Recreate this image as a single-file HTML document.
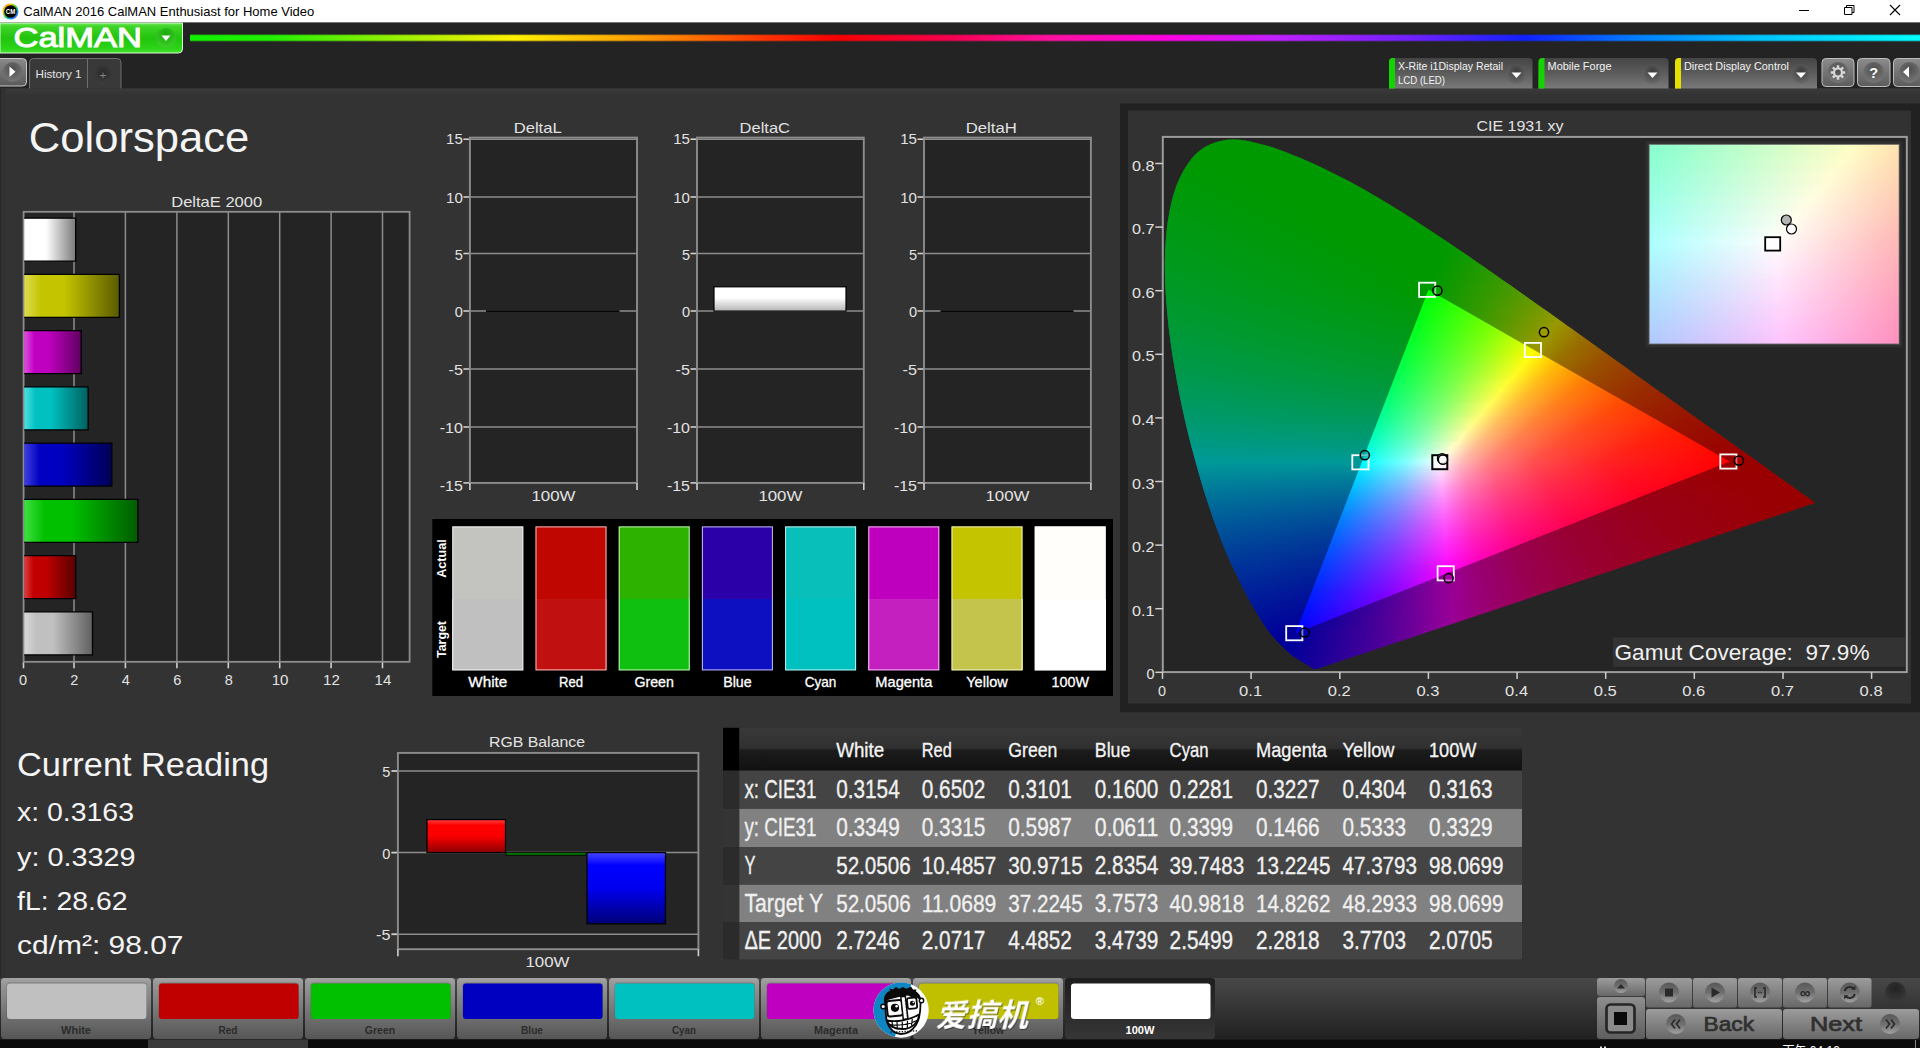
<!DOCTYPE html>
<html><head><meta charset="utf-8"><title>CalMAN 2016 CalMAN Enthusiast for Home Video</title>
<style>
html,body{margin:0;padding:0;background:#333;width:1920px;height:1048px;overflow:hidden}
svg{position:absolute;left:0;top:0}
text{font-family:"Liberation Sans", "Noto Sans CJK SC", sans-serif}
#cie,#ins{position:absolute;left:0;top:0;width:1920px;height:1048px}
#cie{clip-path:polygon(1316.4px 669.0px,1316.3px 669.1px,1316.3px 669.1px,1316.1px 669.1px,1316.0px 669.2px,1315.9px 669.2px,1315.7px 669.2px,1315.5px 669.2px,1315.2px 669.2px,1314.9px 669.2px,1314.6px 669.1px,1314.3px 669.1px,1314.0px 669.0px,1313.7px 668.9px,1313.4px 668.7px,1313.0px 668.6px,1312.7px 668.4px,1312.3px 668.1px,1311.8px 667.8px,1311.2px 667.5px,1310.7px 667.2px,1310.1px 666.8px,1309.4px 666.3px,1308.6px 665.8px,1307.8px 665.3px,1306.8px 664.7px,1305.8px 664.1px,1304.8px 663.4px,1303.6px 662.7px,1302.3px 661.9px,1300.8px 660.9px,1299.3px 660.0px,1297.7px 659.0px,1295.9px 658.0px,1294.0px 656.7px,1291.9px 655.2px,1289.6px 653.3px,1287.0px 650.9px,1284.0px 648.1px,1280.9px 645.0px,1277.7px 641.7px,1274.7px 638.5px,1271.9px 635.3px,1269.5px 632.4px,1267.4px 629.6px,1265.4px 626.8px,1263.4px 623.8px,1261.3px 620.5px,1259.0px 616.8px,1256.6px 612.7px,1254.0px 608.4px,1251.3px 603.7px,1248.6px 598.7px,1245.7px 593.3px,1242.7px 587.5px,1239.6px 581.3px,1236.4px 574.7px,1233.0px 567.7px,1229.5px 560.3px,1226.1px 552.5px,1222.6px 544.1px,1219.2px 535.2px,1215.7px 525.8px,1212.2px 516.0px,1208.8px 505.7px,1205.3px 495.0px,1201.9px 483.9px,1198.5px 472.3px,1195.1px 460.1px,1191.7px 447.5px,1188.4px 434.7px,1185.3px 421.7px,1182.4px 408.7px,1179.7px 395.6px,1177.1px 382.1px,1174.7px 368.5px,1172.4px 355.0px,1170.5px 341.5px,1168.8px 328.4px,1167.5px 315.6px,1166.4px 302.7px,1165.5px 290.1px,1165.0px 277.7px,1164.8px 265.7px,1165.0px 254.1px,1165.6px 242.9px,1166.5px 232.0px,1167.8px 221.5px,1169.5px 211.4px,1171.5px 202.0px,1173.9px 193.2px,1176.7px 185.1px,1180.0px 177.5px,1183.6px 170.5px,1187.5px 164.2px,1191.7px 158.6px,1196.1px 153.7px,1200.8px 149.7px,1205.8px 146.5px,1211.1px 144.0px,1216.5px 142.1px,1222.0px 140.8px,1227.6px 139.8px,1233.3px 139.5px,1239.1px 139.7px,1245.1px 140.6px,1251.1px 141.8px,1257.1px 143.2px,1263.1px 144.7px,1269.1px 146.3px,1275.2px 148.3px,1281.2px 150.5px,1287.3px 152.8px,1293.3px 155.2px,1299.1px 157.6px,1304.9px 160.1px,1310.7px 162.5px,1316.3px 165.1px,1322.0px 167.7px,1327.6px 170.4px,1333.1px 173.2px,1338.6px 175.9px,1344.1px 178.8px,1349.6px 181.6px,1355.0px 184.6px,1360.4px 187.6px,1365.8px 190.6px,1371.2px 193.7px,1376.5px 196.8px,1381.9px 200.0px,1387.3px 203.2px,1392.6px 206.5px,1398.0px 209.7px,1403.3px 213.1px,1408.6px 216.4px,1413.9px 219.8px,1419.2px 223.3px,1424.5px 226.7px,1429.8px 230.2px,1435.1px 233.7px,1440.4px 237.2px,1445.7px 240.7px,1451.0px 244.3px,1456.3px 247.9px,1461.6px 251.5px,1466.9px 255.1px,1472.2px 258.8px,1477.5px 262.4px,1482.8px 266.1px,1488.1px 269.8px,1493.4px 273.5px,1498.7px 277.2px,1504.0px 280.9px,1509.3px 284.6px,1514.6px 288.3px,1519.8px 292.0px,1525.1px 295.8px,1530.4px 299.5px,1535.6px 303.2px,1540.9px 306.9px,1546.1px 310.6px,1551.4px 314.3px,1556.6px 318.0px,1561.8px 321.7px,1566.9px 325.4px,1572.1px 329.1px,1577.2px 332.8px,1582.4px 336.4px,1587.4px 340.1px,1592.5px 343.7px,1597.5px 347.3px,1602.6px 350.9px,1607.6px 354.5px,1612.5px 358.0px,1617.4px 361.5px,1622.3px 365.0px,1627.2px 368.5px,1632.0px 371.9px,1636.7px 375.4px,1641.5px 378.7px,1646.2px 382.1px,1650.8px 385.4px,1655.4px 388.7px,1659.9px 391.9px,1664.4px 395.1px,1668.8px 398.3px,1673.2px 401.4px,1677.5px 404.4px,1681.7px 407.5px,1685.9px 410.5px,1689.9px 413.4px,1693.9px 416.3px,1697.8px 419.1px,1701.6px 421.8px,1705.3px 424.4px,1708.9px 427.0px,1712.4px 429.5px,1715.9px 432.0px,1719.3px 434.4px,1722.6px 436.8px,1725.9px 439.1px,1729.1px 441.4px,1732.2px 443.6px,1735.2px 445.8px,1738.1px 447.9px,1740.8px 449.8px,1743.3px 451.5px,1745.7px 453.2px,1748.2px 455.0px,1750.8px 456.8px,1753.8px 459.0px,1757.3px 461.5px,1761.2px 464.3px,1765.3px 467.2px,1769.4px 470.2px,1773.2px 472.9px,1776.7px 475.4px,1779.6px 477.5px,1782.3px 479.4px,1784.8px 481.2px,1787.0px 482.8px,1789.2px 484.3px,1791.2px 485.8px,1793.2px 487.2px,1795.0px 488.5px,1796.7px 489.7px,1798.3px 490.8px,1799.7px 491.9px,1801.1px 492.9px,1802.4px 493.8px,1803.6px 494.6px,1804.6px 495.4px,1805.6px 496.0px,1806.5px 496.7px,1807.3px 497.3px,1808.1px 497.8px,1808.7px 498.3px,1809.2px 498.6px,1809.8px 499.0px,1810.3px 499.4px,1810.9px 499.8px,1811.6px 500.3px,1812.4px 500.9px,1813.2px 501.5px,1814.0px 502.0px,1814.6px 502.5px,1815.1px 502.8px)}
#cie i,#ins i{position:absolute;display:block;height:2.3px}
</style></head><body>
<svg width="1920" height="1048" viewBox="0 0 1920 1048"><defs><linearGradient id="topband" x1="0" y1="0" x2="0" y2="1"><stop offset="0" stop-color="#3a3a3a"/><stop offset="1" stop-color="#333333"/></linearGradient><linearGradient id="rb" x1="0" y1="0" x2="1" y2="1"><stop offset="0" stop-color="#f33"/><stop offset=".25" stop-color="#fc0"/><stop offset=".5" stop-color="#3c3"/><stop offset=".75" stop-color="#09f"/><stop offset="1" stop-color="#c0c"/></linearGradient><linearGradient id="cmg" x1="0" y1="0" x2="0" y2="1"><stop offset="0" stop-color="#6fe85a"/><stop offset="0.12" stop-color="#3fd428"/><stop offset="0.5" stop-color="#22c40e"/><stop offset="0.85" stop-color="#2bd416"/><stop offset="1" stop-color="#4be436"/></linearGradient><radialGradient id="cmd" cx=".5" cy=".3" r=".7"><stop offset="0" stop-color="#1aa80a"/><stop offset="1" stop-color="#3fd02a"/></radialGradient><linearGradient id="rain" x1="0" y1="0" x2="1" y2="0"><stop offset="0" stop-color="#10f000"/><stop offset="0.046" stop-color="#20f000"/><stop offset="0.125" stop-color="#a0f000"/><stop offset="0.188" stop-color="#fff000"/><stop offset="0.269" stop-color="#ff9000"/><stop offset="0.335" stop-color="#ff3000"/><stop offset="0.374" stop-color="#f40000"/><stop offset="0.44" stop-color="#f40050"/><stop offset="0.497" stop-color="#ff10a0"/><stop offset="0.562" stop-color="#ff00e0"/><stop offset="0.628" stop-color="#c020ff"/><stop offset="0.706" stop-color="#7020ff"/><stop offset="0.772" stop-color="#1020ff"/><stop offset="0.838" stop-color="#0080ff"/><stop offset="0.903" stop-color="#00c0ff"/><stop offset="1" stop-color="#00ffff"/></linearGradient><linearGradient id="pbg" x1="0" y1="0" x2="0" y2="1"><stop offset="0" stop-color="#8a8a8a"/><stop offset="1" stop-color="#5a5a5a"/></linearGradient><radialGradient id="pbc" cx=".5" cy=".35" r=".7"><stop offset="0" stop-color="#4e4e4e"/><stop offset="1" stop-color="#7a7a7a"/></radialGradient><radialGradient id="plc" cx=".5" cy=".4" r=".6"><stop offset="0" stop-color="#2a2a2a"/><stop offset="1" stop-color="#3c3c3c"/></radialGradient><linearGradient id="ddg" x1="0" y1="0" x2="0" y2="1"><stop offset="0" stop-color="#454545"/><stop offset="0.5" stop-color="#5c5c5c"/><stop offset="1" stop-color="#7a7a7a"/></linearGradient><radialGradient id="ddc" cx=".5" cy=".35" r=".65"><stop offset="0" stop-color="#3c3c3c"/><stop offset="1" stop-color="#6a6a6a"/></radialGradient><linearGradient id="tbg" x1="0" y1="0" x2="0" y2="1"><stop offset="0" stop-color="#8c8c8c"/><stop offset="1" stop-color="#5c5c5c"/></linearGradient><linearGradient id="de0" x1="0" y1="0" x2="1" y2="0"><stop offset="0" stop-color="#ffffff"/><stop offset="0.18" stop-color="#ffffff"/><stop offset="0.42" stop-color="#ffffff"/><stop offset="1" stop-color="#7a7a7a"/></linearGradient><linearGradient id="de1" x1="0" y1="0" x2="1" y2="0"><stop offset="0" stop-color="#dcdc50"/><stop offset="0.18" stop-color="#c4c400"/><stop offset="0.42" stop-color="#c4c400"/><stop offset="1" stop-color="#5a5a00"/></linearGradient><linearGradient id="de2" x1="0" y1="0" x2="1" y2="0"><stop offset="0" stop-color="#e050e0"/><stop offset="0.18" stop-color="#c000c0"/><stop offset="0.42" stop-color="#c000c0"/><stop offset="1" stop-color="#600060"/></linearGradient><linearGradient id="de3" x1="0" y1="0" x2="1" y2="0"><stop offset="0" stop-color="#50e0e0"/><stop offset="0.18" stop-color="#00c0c0"/><stop offset="0.42" stop-color="#00c0c0"/><stop offset="1" stop-color="#006060"/></linearGradient><linearGradient id="de4" x1="0" y1="0" x2="1" y2="0"><stop offset="0" stop-color="#4040e0"/><stop offset="0.18" stop-color="#0000c0"/><stop offset="0.42" stop-color="#0000c0"/><stop offset="1" stop-color="#000058"/></linearGradient><linearGradient id="de5" x1="0" y1="0" x2="1" y2="0"><stop offset="0" stop-color="#40e040"/><stop offset="0.18" stop-color="#00c000"/><stop offset="0.42" stop-color="#00c000"/><stop offset="1" stop-color="#005c00"/></linearGradient><linearGradient id="de6" x1="0" y1="0" x2="1" y2="0"><stop offset="0" stop-color="#e04040"/><stop offset="0.18" stop-color="#c00000"/><stop offset="0.42" stop-color="#c00000"/><stop offset="1" stop-color="#5a0000"/></linearGradient><linearGradient id="de7" x1="0" y1="0" x2="1" y2="0"><stop offset="0" stop-color="#d8d8d8"/><stop offset="0.18" stop-color="#c0c0c0"/><stop offset="0.42" stop-color="#c0c0c0"/><stop offset="1" stop-color="#606060"/></linearGradient><linearGradient id="dcb" x1="0" y1="0" x2="0" y2="1"><stop offset="0" stop-color="#ffffff"/><stop offset="0.45" stop-color="#ffffff"/><stop offset="1" stop-color="#b4b4b4"/></linearGradient><linearGradient id="rbr" x1="0" y1="0" x2="0" y2="1"><stop offset="0" stop-color="#ff3c3c"/><stop offset="0.18" stop-color="#ff0000"/><stop offset="0.5" stop-color="#fa0000"/><stop offset="1" stop-color="#8c0000"/></linearGradient><linearGradient id="rbb" x1="0" y1="0" x2="0" y2="1"><stop offset="0" stop-color="#4646ff"/><stop offset="0.18" stop-color="#0000ff"/><stop offset="0.5" stop-color="#0000f0"/><stop offset="1" stop-color="#000078"/></linearGradient><linearGradient id="thd" x1="0" y1="0" x2="0" y2="1"><stop offset="0" stop-color="#393939"/><stop offset="0.47" stop-color="#303030"/><stop offset="0.53" stop-color="#1b1b1b"/><stop offset="1" stop-color="#111111"/></linearGradient><linearGradient id="bbar" x1="0" y1="0" x2="0" y2="1"><stop offset="0" stop-color="#484848"/><stop offset="0.45" stop-color="#363636"/><stop offset="1" stop-color="#202020"/></linearGradient><linearGradient id="tile" x1="0" y1="0" x2="0" y2="1"><stop offset="0" stop-color="#a4a4a4"/><stop offset="0.1" stop-color="#969696"/><stop offset="1" stop-color="#565656"/></linearGradient><linearGradient id="tsel" x1="0" y1="0" x2="0" y2="1"><stop offset="0" stop-color="#1e1e1e"/><stop offset="1" stop-color="#363636"/></linearGradient><linearGradient id="cbt" x1="0" y1="0" x2="0" y2="1"><stop offset="0" stop-color="#9c9c9c"/><stop offset="1" stop-color="#686868"/></linearGradient><linearGradient id="cbt2" x1="0" y1="0" x2="0" y2="1"><stop offset="0" stop-color="#8e8e8e"/><stop offset="1" stop-color="#5e5e5e"/></linearGradient><linearGradient id="cbc" x1="0" y1="0" x2="0" y2="1"><stop offset="0" stop-color="#585858"/><stop offset="0.5" stop-color="#6e6e6e"/><stop offset="1" stop-color="#a2a2a2"/></linearGradient><radialGradient id="dkc" cx=".5" cy=".3" r=".7"><stop offset="0" stop-color="#222"/><stop offset="1" stop-color="#3a3a3a"/></radialGradient></defs>
<rect x="0.0" y="0.0" width="1920.0" height="22.6" fill="#fff"/>
<rect x="0.0" y="22.6" width="1920.0" height="65.9" fill="#232323"/>
<rect x="0.0" y="88.5" width="1920.0" height="7.0" fill="url(#topband)"/>
<rect x="0.0" y="88.5" width="1.0" height="890.0" fill="#262626"/>
<rect x="1.0" y="88.5" width="5.0" height="890.0" fill="#313131"/>
<path d="M0 23H182.5V49a4 4 0 0 1 -4 4H0z" fill="url(#cmg)" stroke="#d4fcd0" stroke-width="1"/>
<rect x="190.0" y="34.3" width="1730.0" height="7.2" fill="url(#rain)" opacity=".45"/>
<rect x="190.0" y="35.2" width="1730.0" height="5.4" fill="url(#rain)"/>
<path d="M-1 58.5H22.5a4 4 0 0 1 4 4V82a4 4 0 0 1 -4 4H-1z" fill="url(#pbg)" stroke="#c8c8c8" stroke-width="1"/>
<path d="M29.5 88.5V62.5a4 4 0 0 1 4 -4H117a4 4 0 0 1 4 4V88.5" fill="#393939" stroke="#6e6e6e" stroke-width="1"/>
<line x1="87.5" y1="59.0" x2="87.5" y2="88.0" stroke="#6e6e6e" stroke-width="1"/>
<path d="M1389 88.5V62a4 4 0 0 1 4 -4H1528.5a4 4 0 0 1 4 4V88.5z" fill="url(#ddg)"/>
<path d="M1389 88.5V62a4 4 0 0 1 4 -4H1395V88.5z" fill="#14d400"/>
<path d="M1538.5 88.5V62a4 4 0 0 1 4 -4H1664.5a4 4 0 0 1 4 4V88.5z" fill="url(#ddg)"/>
<path d="M1538.5 88.5V62a4 4 0 0 1 4 -4H1544.5V88.5z" fill="#14d400"/>
<path d="M1675 88.5V62a4 4 0 0 1 4 -4H1813a4 4 0 0 1 4 4V88.5z" fill="url(#ddg)"/>
<path d="M1675 88.5V62a4 4 0 0 1 4 -4H1681V88.5z" fill="#e6e000"/>
<rect x="1822" y="58.5" width="32" height="28" rx="4" fill="url(#tbg)" stroke="#bdbdbd" stroke-width="1"/>
<rect x="1857.5" y="58.5" width="32.5" height="28" rx="4" fill="url(#tbg)" stroke="#bdbdbd" stroke-width="1"/>
<rect x="1893.5" y="58.5" width="31.5" height="28" rx="4" fill="url(#tbg)" stroke="#bdbdbd" stroke-width="1"/>
<rect x="23.6" y="211.8" width="386.0" height="450.0" fill="#242424"/>
<line x1="74.0" y1="211.8" x2="74.0" y2="661.8" stroke="#8c8c8c" stroke-width="1.5"/>
<line x1="125.4" y1="211.8" x2="125.4" y2="661.8" stroke="#8c8c8c" stroke-width="1.5"/>
<line x1="176.9" y1="211.8" x2="176.9" y2="661.8" stroke="#8c8c8c" stroke-width="1.5"/>
<line x1="228.3" y1="211.8" x2="228.3" y2="661.8" stroke="#8c8c8c" stroke-width="1.5"/>
<line x1="279.7" y1="211.8" x2="279.7" y2="661.8" stroke="#8c8c8c" stroke-width="1.5"/>
<line x1="331.1" y1="211.8" x2="331.1" y2="661.8" stroke="#8c8c8c" stroke-width="1.5"/>
<line x1="382.5" y1="211.8" x2="382.5" y2="661.8" stroke="#8c8c8c" stroke-width="1.5"/>
<line x1="23.5" y1="661.8" x2="23.5" y2="668.3" stroke="#cfcfcf" stroke-width="1.6"/>
<line x1="74.0" y1="661.8" x2="74.0" y2="668.3" stroke="#cfcfcf" stroke-width="1.6"/>
<line x1="125.4" y1="661.8" x2="125.4" y2="668.3" stroke="#cfcfcf" stroke-width="1.6"/>
<line x1="176.9" y1="661.8" x2="176.9" y2="668.3" stroke="#cfcfcf" stroke-width="1.6"/>
<line x1="228.3" y1="661.8" x2="228.3" y2="668.3" stroke="#cfcfcf" stroke-width="1.6"/>
<line x1="279.7" y1="661.8" x2="279.7" y2="668.3" stroke="#cfcfcf" stroke-width="1.6"/>
<line x1="331.1" y1="661.8" x2="331.1" y2="668.3" stroke="#cfcfcf" stroke-width="1.6"/>
<line x1="382.5" y1="661.8" x2="382.5" y2="668.3" stroke="#cfcfcf" stroke-width="1.6"/>
<rect x="23.6" y="211.8" width="386.0" height="450.0" fill="none" stroke="#8c8c8c" stroke-width="1.8"/>
<rect x="24.2" y="218.2" width="51.5" height="43.0" fill="url(#de0)"/>
<path d="M24.2 218.2H75.7V261.2H24.2" fill="none" stroke="#000" stroke-width="1.3"/>
<rect x="24.2" y="274.4" width="95.2" height="43.0" fill="url(#de1)"/>
<path d="M24.2 274.4H119.4V317.4H24.2" fill="none" stroke="#000" stroke-width="1.3"/>
<rect x="24.2" y="330.7" width="57.0" height="43.0" fill="url(#de2)"/>
<path d="M24.2 330.7H81.2V373.7H24.2" fill="none" stroke="#000" stroke-width="1.3"/>
<rect x="24.2" y="386.9" width="63.9" height="43.0" fill="url(#de3)"/>
<path d="M24.2 386.9H88.1V429.9H24.2" fill="none" stroke="#000" stroke-width="1.3"/>
<rect x="24.2" y="443.2" width="87.6" height="43.0" fill="url(#de4)"/>
<path d="M24.2 443.2H111.8V486.2H24.2" fill="none" stroke="#000" stroke-width="1.3"/>
<rect x="24.2" y="499.4" width="113.6" height="43.0" fill="url(#de5)"/>
<path d="M24.2 499.4H137.8V542.4H24.2" fill="none" stroke="#000" stroke-width="1.3"/>
<rect x="24.2" y="555.7" width="51.6" height="43.0" fill="url(#de6)"/>
<path d="M24.2 555.7H75.8V598.7H24.2" fill="none" stroke="#000" stroke-width="1.3"/>
<rect x="24.2" y="611.9" width="68.3" height="43.0" fill="url(#de7)"/>
<path d="M24.2 611.9H92.5V654.9H24.2" fill="none" stroke="#000" stroke-width="1.3"/>
<rect x="469.9" y="137.6" width="167.1" height="345.3" fill="#242424"/>
<line x1="463.4" y1="482.9" x2="469.9" y2="482.9" stroke="#cfcfcf" stroke-width="1.6"/>
<line x1="469.9" y1="427.0" x2="637.0" y2="427.0" stroke="#8c8c8c" stroke-width="1.5"/>
<line x1="463.4" y1="427.0" x2="469.9" y2="427.0" stroke="#cfcfcf" stroke-width="1.6"/>
<line x1="469.9" y1="369.0" x2="637.0" y2="369.0" stroke="#8c8c8c" stroke-width="1.5"/>
<line x1="463.4" y1="369.0" x2="469.9" y2="369.0" stroke="#cfcfcf" stroke-width="1.6"/>
<line x1="469.9" y1="311.0" x2="637.0" y2="311.0" stroke="#8c8c8c" stroke-width="1.5"/>
<line x1="463.4" y1="311.0" x2="469.9" y2="311.0" stroke="#cfcfcf" stroke-width="1.6"/>
<line x1="469.9" y1="253.5" x2="637.0" y2="253.5" stroke="#8c8c8c" stroke-width="1.5"/>
<line x1="463.4" y1="253.5" x2="469.9" y2="253.5" stroke="#cfcfcf" stroke-width="1.6"/>
<line x1="469.9" y1="197.0" x2="637.0" y2="197.0" stroke="#8c8c8c" stroke-width="1.5"/>
<line x1="463.4" y1="197.0" x2="469.9" y2="197.0" stroke="#cfcfcf" stroke-width="1.6"/>
<line x1="469.9" y1="139.2" x2="637.0" y2="139.2" stroke="#8c8c8c" stroke-width="1.5"/>
<line x1="463.4" y1="139.2" x2="469.9" y2="139.2" stroke="#cfcfcf" stroke-width="1.6"/>
<rect x="469.9" y="137.6" width="167.1" height="345.3" fill="none" stroke="#8c8c8c" stroke-width="1.9"/>
<line x1="469.9" y1="482.9" x2="469.9" y2="489.9" stroke="#cfcfcf" stroke-width="1.6"/>
<line x1="637.0" y1="482.9" x2="637.0" y2="489.9" stroke="#cfcfcf" stroke-width="1.6"/>
<line x1="486.0" y1="311.1" x2="619.5" y2="311.1" stroke="#050505" stroke-width="1.8"/>
<rect x="697.0" y="137.6" width="166.8" height="345.3" fill="#242424"/>
<line x1="690.5" y1="482.9" x2="697.0" y2="482.9" stroke="#cfcfcf" stroke-width="1.6"/>
<line x1="697.0" y1="427.0" x2="863.8" y2="427.0" stroke="#8c8c8c" stroke-width="1.5"/>
<line x1="690.5" y1="427.0" x2="697.0" y2="427.0" stroke="#cfcfcf" stroke-width="1.6"/>
<line x1="697.0" y1="369.0" x2="863.8" y2="369.0" stroke="#8c8c8c" stroke-width="1.5"/>
<line x1="690.5" y1="369.0" x2="697.0" y2="369.0" stroke="#cfcfcf" stroke-width="1.6"/>
<line x1="697.0" y1="311.0" x2="863.8" y2="311.0" stroke="#8c8c8c" stroke-width="1.5"/>
<line x1="690.5" y1="311.0" x2="697.0" y2="311.0" stroke="#cfcfcf" stroke-width="1.6"/>
<line x1="697.0" y1="253.5" x2="863.8" y2="253.5" stroke="#8c8c8c" stroke-width="1.5"/>
<line x1="690.5" y1="253.5" x2="697.0" y2="253.5" stroke="#cfcfcf" stroke-width="1.6"/>
<line x1="697.0" y1="197.0" x2="863.8" y2="197.0" stroke="#8c8c8c" stroke-width="1.5"/>
<line x1="690.5" y1="197.0" x2="697.0" y2="197.0" stroke="#cfcfcf" stroke-width="1.6"/>
<line x1="697.0" y1="139.2" x2="863.8" y2="139.2" stroke="#8c8c8c" stroke-width="1.5"/>
<line x1="690.5" y1="139.2" x2="697.0" y2="139.2" stroke="#cfcfcf" stroke-width="1.6"/>
<rect x="697.0" y="137.6" width="166.8" height="345.3" fill="none" stroke="#8c8c8c" stroke-width="1.9"/>
<line x1="697.0" y1="482.9" x2="697.0" y2="489.9" stroke="#cfcfcf" stroke-width="1.6"/>
<line x1="863.8" y1="482.9" x2="863.8" y2="489.9" stroke="#cfcfcf" stroke-width="1.6"/>
<rect x="714.0" y="286.8" width="132.0" height="24.3" fill="url(#dcb)" stroke="#000" stroke-width="1.2"/>
<rect x="924.0" y="137.6" width="166.9" height="345.3" fill="#242424"/>
<line x1="917.5" y1="482.9" x2="924.0" y2="482.9" stroke="#cfcfcf" stroke-width="1.6"/>
<line x1="924.0" y1="427.0" x2="1090.9" y2="427.0" stroke="#8c8c8c" stroke-width="1.5"/>
<line x1="917.5" y1="427.0" x2="924.0" y2="427.0" stroke="#cfcfcf" stroke-width="1.6"/>
<line x1="924.0" y1="369.0" x2="1090.9" y2="369.0" stroke="#8c8c8c" stroke-width="1.5"/>
<line x1="917.5" y1="369.0" x2="924.0" y2="369.0" stroke="#cfcfcf" stroke-width="1.6"/>
<line x1="924.0" y1="311.0" x2="1090.9" y2="311.0" stroke="#8c8c8c" stroke-width="1.5"/>
<line x1="917.5" y1="311.0" x2="924.0" y2="311.0" stroke="#cfcfcf" stroke-width="1.6"/>
<line x1="924.0" y1="253.5" x2="1090.9" y2="253.5" stroke="#8c8c8c" stroke-width="1.5"/>
<line x1="917.5" y1="253.5" x2="924.0" y2="253.5" stroke="#cfcfcf" stroke-width="1.6"/>
<line x1="924.0" y1="197.0" x2="1090.9" y2="197.0" stroke="#8c8c8c" stroke-width="1.5"/>
<line x1="917.5" y1="197.0" x2="924.0" y2="197.0" stroke="#cfcfcf" stroke-width="1.6"/>
<line x1="924.0" y1="139.2" x2="1090.9" y2="139.2" stroke="#8c8c8c" stroke-width="1.5"/>
<line x1="917.5" y1="139.2" x2="924.0" y2="139.2" stroke="#cfcfcf" stroke-width="1.6"/>
<rect x="924.0" y="137.6" width="166.9" height="345.3" fill="none" stroke="#8c8c8c" stroke-width="1.9"/>
<line x1="924.0" y1="482.9" x2="924.0" y2="489.9" stroke="#cfcfcf" stroke-width="1.6"/>
<line x1="1090.9" y1="482.9" x2="1090.9" y2="489.9" stroke="#cfcfcf" stroke-width="1.6"/>
<line x1="940.5" y1="311.1" x2="1073.5" y2="311.1" stroke="#050505" stroke-width="1.8"/>
<rect x="432.3" y="519.0" width="680.7" height="177.0" fill="#000"/>
<rect x="452.3" y="526.4" width="71.0" height="144.0" fill="#c3c3bf"/>
<rect x="452.3" y="598.5" width="71.0" height="71.9" fill="#c0c0c0" shape-rendering="crispEdges"/>
<rect x="452.8" y="526.9" width="70.0" height="143.0" fill="none" stroke="#fff" stroke-opacity=".75" stroke-width="1"/>
<rect x="535.5" y="526.4" width="71.0" height="144.0" fill="#c00600"/>
<rect x="535.5" y="598.5" width="71.0" height="71.9" fill="#c11010" shape-rendering="crispEdges"/>
<rect x="536.0" y="526.9" width="70.0" height="143.0" fill="none" stroke="#fff" stroke-opacity=".75" stroke-width="1"/>
<rect x="618.7" y="526.4" width="71.0" height="144.0" fill="#2db200"/>
<rect x="618.7" y="598.5" width="71.0" height="71.9" fill="#10c010" shape-rendering="crispEdges"/>
<rect x="619.2" y="526.9" width="70.0" height="143.0" fill="none" stroke="#fff" stroke-opacity=".75" stroke-width="1"/>
<rect x="701.9" y="526.4" width="71.0" height="144.0" fill="#2c00a8"/>
<rect x="701.9" y="598.5" width="71.0" height="71.9" fill="#0c10c0" shape-rendering="crispEdges"/>
<rect x="702.4" y="526.9" width="70.0" height="143.0" fill="none" stroke="#fff" stroke-opacity=".75" stroke-width="1"/>
<rect x="785.1" y="526.4" width="71.0" height="144.0" fill="#08bfba"/>
<rect x="785.1" y="598.5" width="71.0" height="71.9" fill="#00c0c0" shape-rendering="crispEdges"/>
<rect x="785.6" y="526.9" width="70.0" height="143.0" fill="none" stroke="#fff" stroke-opacity=".75" stroke-width="1"/>
<rect x="868.3" y="526.4" width="71.0" height="144.0" fill="#be00be"/>
<rect x="868.3" y="598.5" width="71.0" height="71.9" fill="#c420c0" shape-rendering="crispEdges"/>
<rect x="868.8" y="526.9" width="70.0" height="143.0" fill="none" stroke="#fff" stroke-opacity=".75" stroke-width="1"/>
<rect x="951.5" y="526.4" width="71.0" height="144.0" fill="#c4c400"/>
<rect x="951.5" y="598.5" width="71.0" height="71.9" fill="#c4c44c" shape-rendering="crispEdges"/>
<rect x="952.0" y="526.9" width="70.0" height="143.0" fill="none" stroke="#fff" stroke-opacity=".75" stroke-width="1"/>
<rect x="1034.7" y="526.4" width="71.0" height="144.0" fill="#fffefa"/>
<rect x="1034.7" y="598.5" width="71.0" height="71.9" fill="#ffffff" shape-rendering="crispEdges"/>
<rect x="1035.2" y="526.9" width="70.0" height="143.0" fill="none" stroke="#fff" stroke-opacity=".75" stroke-width="1"/>
<rect x="1120.0" y="103.6" width="800.0" height="608.6" fill="#212121"/>
<rect x="1128.0" y="110.6" width="783.0" height="593.0" fill="#323232"/>
<rect x="1162.8" y="136.9" width="744.0" height="535.2" fill="#252525"/>
<rect x="1162.8" y="136.9" width="744.0" height="535.2" fill="none" stroke="#9c9c9c" stroke-width="2"/>
<line x1="1162.5" y1="672.1" x2="1162.5" y2="678.9" stroke="#cfcfcf" stroke-width="1.5"/>
<line x1="1155.3" y1="672.3" x2="1162.8" y2="672.3" stroke="#cfcfcf" stroke-width="1.5"/>
<line x1="1251.1" y1="672.1" x2="1251.1" y2="678.9" stroke="#cfcfcf" stroke-width="1.5"/>
<line x1="1155.3" y1="608.7" x2="1162.8" y2="608.7" stroke="#cfcfcf" stroke-width="1.5"/>
<line x1="1339.8" y1="672.1" x2="1339.8" y2="678.9" stroke="#cfcfcf" stroke-width="1.5"/>
<line x1="1155.3" y1="545.1" x2="1162.8" y2="545.1" stroke="#cfcfcf" stroke-width="1.5"/>
<line x1="1428.4" y1="672.1" x2="1428.4" y2="678.9" stroke="#cfcfcf" stroke-width="1.5"/>
<line x1="1155.3" y1="481.5" x2="1162.8" y2="481.5" stroke="#cfcfcf" stroke-width="1.5"/>
<line x1="1517.1" y1="672.1" x2="1517.1" y2="678.9" stroke="#cfcfcf" stroke-width="1.5"/>
<line x1="1155.3" y1="417.9" x2="1162.8" y2="417.9" stroke="#cfcfcf" stroke-width="1.5"/>
<line x1="1605.7" y1="672.1" x2="1605.7" y2="678.9" stroke="#cfcfcf" stroke-width="1.5"/>
<line x1="1155.3" y1="354.3" x2="1162.8" y2="354.3" stroke="#cfcfcf" stroke-width="1.5"/>
<line x1="1694.3" y1="672.1" x2="1694.3" y2="678.9" stroke="#cfcfcf" stroke-width="1.5"/>
<line x1="1155.3" y1="290.7" x2="1162.8" y2="290.7" stroke="#cfcfcf" stroke-width="1.5"/>
<line x1="1783.0" y1="672.1" x2="1783.0" y2="678.9" stroke="#cfcfcf" stroke-width="1.5"/>
<line x1="1155.3" y1="227.1" x2="1162.8" y2="227.1" stroke="#cfcfcf" stroke-width="1.5"/>
<line x1="1871.6" y1="672.1" x2="1871.6" y2="678.9" stroke="#cfcfcf" stroke-width="1.5"/>
<line x1="1155.3" y1="163.5" x2="1162.8" y2="163.5" stroke="#cfcfcf" stroke-width="1.5"/>
<rect x="397.9" y="752.9" width="300.5" height="196.3" fill="#242424"/>
<line x1="397.9" y1="934.2" x2="698.4" y2="934.2" stroke="#8c8c8c" stroke-width="1.5"/>
<line x1="391.4" y1="934.2" x2="397.9" y2="934.2" stroke="#cfcfcf" stroke-width="1.8"/>
<line x1="397.9" y1="852.6" x2="698.4" y2="852.6" stroke="#8c8c8c" stroke-width="1.5"/>
<line x1="391.4" y1="852.6" x2="397.9" y2="852.6" stroke="#cfcfcf" stroke-width="1.8"/>
<line x1="397.9" y1="771.0" x2="698.4" y2="771.0" stroke="#8c8c8c" stroke-width="1.5"/>
<line x1="391.4" y1="771.0" x2="397.9" y2="771.0" stroke="#cfcfcf" stroke-width="1.8"/>
<rect x="397.9" y="752.9" width="300.5" height="196.3" fill="none" stroke="#8c8c8c" stroke-width="1.9"/>
<line x1="397.9" y1="949.2" x2="397.9" y2="956.2" stroke="#cfcfcf" stroke-width="1.6"/>
<line x1="698.4" y1="949.2" x2="698.4" y2="956.2" stroke="#cfcfcf" stroke-width="1.6"/>
<rect x="427.0" y="819.6" width="78.5" height="33.0" fill="url(#rbr)" stroke="#000" stroke-width="1.2"/>
<rect x="506.0" y="852.6" width="80.0" height="2.6" fill="#007800" stroke="#000" stroke-width=".8"/>
<rect x="587.0" y="852.6" width="78.5" height="71.2" fill="url(#rbb)" stroke="#000" stroke-width="1.2"/>
<rect x="739.2" y="727.8" width="782.8" height="42.9" fill="url(#thd)"/>
<rect x="723.0" y="727.8" width="16.2" height="42.9" fill="#000"/>
<rect x="739.2" y="770.7" width="782.8" height="38.2" fill="#444444"/>
<rect x="723.0" y="770.7" width="16.2" height="38.2" fill="#2b2b2b"/>
<rect x="739.2" y="808.9" width="782.8" height="38.1" fill="#818181"/>
<rect x="723.0" y="808.9" width="16.2" height="38.1" fill="#343434"/>
<rect x="739.2" y="847.0" width="782.8" height="37.8" fill="#444444"/>
<rect x="723.0" y="847.0" width="16.2" height="37.8" fill="#2b2b2b"/>
<rect x="739.2" y="884.8" width="782.8" height="37.4" fill="#818181"/>
<rect x="723.0" y="884.8" width="16.2" height="37.4" fill="#343434"/>
<rect x="739.2" y="922.2" width="782.8" height="37.2" fill="#444444"/>
<rect x="723.0" y="922.2" width="16.2" height="37.2" fill="#2b2b2b"/>
<rect x="0.0" y="978.0" width="1920.0" height="61.5" fill="url(#bbar)"/>
<rect x="0.0" y="1039.5" width="1920.0" height="9.0" fill="#0b0b0b"/>
<rect x="148.0" y="1039.5" width="160.0" height="9.0" fill="#3a3a3a"/>
<rect x="1" y="978" width="150" height="61" rx="3.5" fill="url(#tile)"/>
<rect x="6.5" y="982.5" width="140.5" height="36.5" rx="3.5" fill="#000" fill-opacity=".18"/>
<rect x="7" y="983.5" width="139.5" height="35.5" rx="3" fill="#c0c0c0"/>
<rect x="153" y="978" width="150" height="61" rx="3.5" fill="url(#tile)"/>
<rect x="158.5" y="982.5" width="140.5" height="36.5" rx="3.5" fill="#000" fill-opacity=".18"/>
<rect x="159" y="983.5" width="139.5" height="35.5" rx="3" fill="#c00000"/>
<rect x="305" y="978" width="150" height="61" rx="3.5" fill="url(#tile)"/>
<rect x="310.5" y="982.5" width="140.5" height="36.5" rx="3.5" fill="#000" fill-opacity=".18"/>
<rect x="311" y="983.5" width="139.5" height="35.5" rx="3" fill="#00c000"/>
<rect x="457" y="978" width="150" height="61" rx="3.5" fill="url(#tile)"/>
<rect x="462.5" y="982.5" width="140.5" height="36.5" rx="3.5" fill="#000" fill-opacity=".18"/>
<rect x="463" y="983.5" width="139.5" height="35.5" rx="3" fill="#0000c0"/>
<rect x="609" y="978" width="150" height="61" rx="3.5" fill="url(#tile)"/>
<rect x="614.5" y="982.5" width="140.5" height="36.5" rx="3.5" fill="#000" fill-opacity=".18"/>
<rect x="615" y="983.5" width="139.5" height="35.5" rx="3" fill="#00c0c0"/>
<rect x="761" y="978" width="150" height="61" rx="3.5" fill="url(#tile)"/>
<rect x="766.5" y="982.5" width="140.5" height="36.5" rx="3.5" fill="#000" fill-opacity=".18"/>
<rect x="767" y="983.5" width="139.5" height="35.5" rx="3" fill="#c000c0"/>
<rect x="913" y="978" width="150" height="61" rx="3.5" fill="url(#tile)"/>
<rect x="918.5" y="982.5" width="140.5" height="36.5" rx="3.5" fill="#000" fill-opacity=".18"/>
<rect x="919" y="983.5" width="139.5" height="35.5" rx="3" fill="#c0c000"/>
<rect x="1065" y="978" width="150" height="61" rx="3.5" fill="url(#tsel)"/>
<rect x="1071" y="983.5" width="139.5" height="35.5" rx="3" fill="#ffffff"/>
<rect x="1597" y="978" width="48" height="18" rx="3" fill="url(#cbt)"/>
<rect x="1597" y="997" width="48" height="42" rx="3" fill="url(#cbt2)"/>
<rect x="1646" y="978" width="46" height="29.5" rx="2.5" fill="url(#cbt)"/>
<rect x="1693" y="978" width="44" height="29.5" rx="2.5" fill="url(#cbt)"/>
<rect x="1738" y="978" width="44" height="29.5" rx="2.5" fill="url(#cbt)"/>
<rect x="1783" y="978" width="44" height="29.5" rx="2.5" fill="url(#cbt)"/>
<rect x="1828" y="978" width="43.5" height="29.5" rx="2.5" fill="url(#cbt)"/>
<rect x="1646" y="1009" width="136" height="30" rx="3" fill="url(#cbt)"/>
<rect x="1783" y="1009" width="136" height="30" rx="3" fill="url(#cbt)"/>
</svg>
<div id="cie"><i style="top:138px;left:1218.9px;width:30.4px;background:linear-gradient(90deg,#00ff00 0px,#00ff00 30px)"></i><i style="top:140px;left:1211.5px;width:47.0px;background:linear-gradient(90deg,#00ff00 0px,#00ff00 47px)"></i><i style="top:142px;left:1206.4px;width:60.2px;background:linear-gradient(90deg,#00ff00 0px,#00ff00 60px)"></i><i style="top:144px;left:1202.4px;width:71.2px;background:linear-gradient(90deg,#00ff00 0px,#00ff00 71px)"></i><i style="top:146px;left:1199.2px;width:80.3px;background:linear-gradient(90deg,#00ff00 0px,#00ff00 80px)"></i><i style="top:148px;left:1196.6px;width:88.5px;background:linear-gradient(90deg,#00ff00 0px,#00ff00 88px)"></i><i style="top:150px;left:1194.2px;width:96.0px;background:linear-gradient(90deg,#00ff00 0px,#00ff00 96px)"></i><i style="top:152px;left:1192.2px;width:103.0px;background:linear-gradient(90deg,#00ff00 0px,#00ff00 103px)"></i><i style="top:154px;left:1190.4px;width:109.7px;background:linear-gradient(90deg,#00ff00 0px,#00ff00 110px)"></i><i style="top:156px;left:1188.6px;width:116.4px;background:linear-gradient(90deg,#00ff01 0px,#00ff00 116px)"></i><i style="top:158px;left:1187.1px;width:122.6px;background:linear-gradient(90deg,#00ff02 0px,#00ff00 123px)"></i><i style="top:160px;left:1185.6px;width:128.6px;background:linear-gradient(90deg,#00ff03 0px,#00ff00 129px)"></i><i style="top:162px;left:1184.2px;width:134.5px;background:linear-gradient(90deg,#00ff04 0px,#00ff00 134px)"></i><i style="top:164px;left:1182.9px;width:140.0px;background:linear-gradient(90deg,#00ff05 0px,#00ff00 102px,#00ff00 140px)"></i><i style="top:166px;left:1181.7px;width:145.5px;background:linear-gradient(90deg,#00ff06 0px,#00ff00 84px,#00ff00 145px)"></i><i style="top:168px;left:1180.5px;width:150.9px;background:linear-gradient(90deg,#00ff07 0px,#00ff00 78px,#00ff00 151px)"></i><i style="top:170px;left:1179.4px;width:156.0px;background:linear-gradient(90deg,#00ff08 0px,#00ff00 78px,#00ff00 156px)"></i><i style="top:172px;left:1178.4px;width:161.0px;background:linear-gradient(90deg,#00ff09 0px,#00ff00 79px,#00ff00 161px)"></i><i style="top:174px;left:1177.3px;width:166.0px;background:linear-gradient(90deg,#00ff0a 0px,#00ff00 81px,#00ff00 166px)"></i><i style="top:176px;left:1176.4px;width:170.8px;background:linear-gradient(90deg,#00ff0b 0px,#00ff00 84px,#00ff00 171px)"></i><i style="top:178px;left:1175.6px;width:175.4px;background:linear-gradient(90deg,#00ff0c 0px,#00ff00 87px,#00ff00 175px)"></i><i style="top:180px;left:1174.7px;width:180.0px;background:linear-gradient(90deg,#00ff0d 0px,#00ff00 90px,#00ff00 180px)"></i><i style="top:182px;left:1173.8px;width:184.5px;background:linear-gradient(90deg,#00ff0d 0px,#00ff00 94px,#00ff00 185px)"></i><i style="top:184px;left:1173.1px;width:188.9px;background:linear-gradient(90deg,#00ff0e 0px,#00ff00 97px,#00ff00 189px)"></i><i style="top:186px;left:1172.4px;width:193.2px;background:linear-gradient(90deg,#00ff0f 0px,#00ff00 101px,#00ff00 193px)"></i><i style="top:188px;left:1171.7px;width:197.4px;background:linear-gradient(90deg,#00ff10 0px,#00ff00 104px,#00ff00 197px)"></i><i style="top:190px;left:1171.0px;width:201.6px;background:linear-gradient(90deg,#00ff11 0px,#00ff00 108px,#00ff00 202px)"></i><i style="top:192px;left:1170.5px;width:205.7px;background:linear-gradient(90deg,#00ff12 0px,#00ff00 112px,#00ff00 206px)"></i><i style="top:194px;left:1169.9px;width:209.6px;background:linear-gradient(90deg,#00ff13 0px,#00ff00 115px,#00ff00 210px)"></i><i style="top:196px;left:1169.4px;width:213.6px;background:linear-gradient(90deg,#00ff14 0px,#00ff00 119px,#00ff00 214px)"></i><i style="top:198px;left:1168.8px;width:217.5px;background:linear-gradient(90deg,#00ff15 0px,#00ff00 123px,#00ff00 217px)"></i><i style="top:200px;left:1168.3px;width:221.3px;background:linear-gradient(90deg,#00ff16 0px,#00ff00 127px,#00ff00 221px)"></i><i style="top:202px;left:1167.9px;width:225.0px;background:linear-gradient(90deg,#00ff17 0px,#00ff00 130px,#00ff00 225px)"></i><i style="top:204px;left:1167.5px;width:228.7px;background:linear-gradient(90deg,#00ff17 0px,#00ff00 134px,#00ff00 229px)"></i><i style="top:206px;left:1167.0px;width:232.4px;background:linear-gradient(90deg,#00ff18 0px,#00ff00 137px,#00ff00 232px)"></i><i style="top:208px;left:1166.6px;width:236.1px;background:linear-gradient(90deg,#00ff19 0px,#00ff00 141px,#00ff00 236px)"></i><i style="top:210px;left:1166.2px;width:239.6px;background:linear-gradient(90deg,#00ff1a 0px,#00ff00 145px,#00ff00 240px)"></i><i style="top:212px;left:1165.9px;width:243.1px;background:linear-gradient(90deg,#00ff1b 0px,#00ff00 149px,#00ff00 243px)"></i><i style="top:214px;left:1165.6px;width:246.6px;background:linear-gradient(90deg,#00ff1c 0px,#00ff00 152px,#00ff00 247px)"></i><i style="top:216px;left:1165.3px;width:250.1px;background:linear-gradient(90deg,#00ff1d 0px,#00ff00 156px,#00ff00 250px)"></i><i style="top:218px;left:1164.9px;width:253.5px;background:linear-gradient(90deg,#00ff1e 0px,#00ff00 159px,#00ff00 254px)"></i><i style="top:220px;left:1164.7px;width:256.9px;background:linear-gradient(90deg,#00ff1f 0px,#00ff00 163px,#00ff00 257px)"></i><i style="top:222px;left:1164.4px;width:260.2px;background:linear-gradient(90deg,#00ff20 0px,#00ff00 167px,#00ff00 260px)"></i><i style="top:224px;left:1164.2px;width:263.5px;background:linear-gradient(90deg,#00ff21 0px,#00ff00 170px,#00ff00 263px)"></i><i style="top:226px;left:1163.9px;width:266.8px;background:linear-gradient(90deg,#00ff22 0px,#00ff00 174px,#00ff00 267px)"></i><i style="top:228px;left:1163.7px;width:270.1px;background:linear-gradient(90deg,#00ff23 0px,#00ff00 177px,#00ff00 270px)"></i><i style="top:230px;left:1163.5px;width:273.3px;background:linear-gradient(90deg,#00ff24 0px,#00ff00 181px,#00ff00 273px)"></i><i style="top:232px;left:1163.3px;width:276.5px;background:linear-gradient(90deg,#00ff25 0px,#00ff00 185px,#00ff00 277px)"></i><i style="top:234px;left:1163.1px;width:279.7px;background:linear-gradient(90deg,#00ff26 0px,#00ff00 188px,#00ff00 280px)"></i><i style="top:236px;left:1162.9px;width:282.9px;background:linear-gradient(90deg,#00ff27 0px,#00ff00 192px,#00ff00 283px)"></i><i style="top:238px;left:1162.8px;width:286.0px;background:linear-gradient(90deg,#00ff28 0px,#00ff00 195px,#01ff00 286px)"></i><i style="top:240px;left:1162.6px;width:289.1px;background:linear-gradient(90deg,#00ff29 0px,#00ff00 199px,#04ff00 288px,#05ff00 289px)"></i><i style="top:242px;left:1162.5px;width:292.2px;background:linear-gradient(90deg,#00ff29 0px,#00ff00 202px,#03ff00 287px,#09ff00 292px)"></i><i style="top:244px;left:1162.4px;width:295.3px;background:linear-gradient(90deg,#00ff2b 0px,#00ff00 206px,#03ff00 286px,#0eff00 295px)"></i><i style="top:246px;left:1162.3px;width:298.3px;background:linear-gradient(90deg,#00ff2c 0px,#00ff00 209px,#04ff00 286px,#12ff00 298px)"></i><i style="top:248px;left:1162.2px;width:301.4px;background:linear-gradient(90deg,#00ff2d 0px,#00ff00 213px,#03ff00 285px,#17ff00 301px)"></i><i style="top:250px;left:1162.1px;width:304.4px;background:linear-gradient(90deg,#00ff2e 0px,#00ff00 216px,#03ff00 284px,#1bff00 304px)"></i><i style="top:252px;left:1162.0px;width:307.4px;background:linear-gradient(90deg,#00ff2f 0px,#00ff00 220px,#04ff00 284px,#20ff00 307px)"></i><i style="top:254px;left:1162.0px;width:310.4px;background:linear-gradient(90deg,#00ff30 0px,#00ff00 223px,#03ff00 283px,#25ff00 310px)"></i><i style="top:256px;left:1161.9px;width:313.3px;background:linear-gradient(90deg,#00ff31 0px,#00ff00 226px,#03ff00 282px,#2aff00 313px)"></i><i style="top:258px;left:1161.9px;width:316.3px;background:linear-gradient(90deg,#00ff32 0px,#00ff00 230px,#04ff00 282px,#2fff00 316px)"></i><i style="top:260px;left:1161.8px;width:319.2px;background:linear-gradient(90deg,#00ff33 0px,#00ff00 233px,#04ff00 281px,#34ff00 319px)"></i><i style="top:262px;left:1161.8px;width:322.1px;background:linear-gradient(90deg,#00ff34 0px,#00ff00 237px,#04ff00 280px,#39ff00 322px)"></i><i style="top:264px;left:1161.8px;width:325.0px;background:linear-gradient(90deg,#00ff35 0px,#00ff00 240px,#03ff00 279px,#3eff00 325px)"></i><i style="top:266px;left:1161.8px;width:327.9px;background:linear-gradient(90deg,#00ff36 0px,#00ff00 244px,#04ff00 279px,#44ff00 328px)"></i><i style="top:268px;left:1161.8px;width:330.8px;background:linear-gradient(90deg,#00ff37 0px,#00ff00 247px,#04ff00 278px,#49ff00 331px)"></i><i style="top:270px;left:1161.8px;width:333.6px;background:linear-gradient(90deg,#00ff38 0px,#00ff00 250px,#04ff00 277px,#4fff00 334px)"></i><i style="top:272px;left:1161.9px;width:336.4px;background:linear-gradient(90deg,#00ff39 0px,#00ff00 254px,#04ff00 276px,#54ff00 336px)"></i><i style="top:274px;left:1161.9px;width:339.3px;background:linear-gradient(90deg,#00ff3a 0px,#00ff00 257px,#05ff00 276px,#5aff00 339px)"></i><i style="top:276px;left:1161.9px;width:342.1px;background:linear-gradient(90deg,#00ff3c 0px,#00ff00 260px,#04ff00 275px,#60ff00 342px)"></i><i style="top:278px;left:1162.0px;width:344.9px;background:linear-gradient(90deg,#00ff3d 0px,#00ff00 264px,#07ff00 276px,#66ff00 345px)"></i><i style="top:280px;left:1162.0px;width:347.7px;background:linear-gradient(90deg,#00ff3e 0px,#00ff00 267px,#4aff00 325px,#6dff00 348px)"></i><i style="top:282px;left:1162.1px;width:350.4px;background:linear-gradient(90deg,#00ff3f 0px,#00ff06 237px,#04ff00 272px,#73ff00 350px)"></i><i style="top:284px;left:1162.2px;width:353.2px;background:linear-gradient(90deg,#00ff40 0px,#00ff07 237px,#04ff00 271px,#79ff00 353px)"></i><i style="top:286px;left:1162.3px;width:355.9px;background:linear-gradient(90deg,#00ff41 0px,#00ff08 236px,#03ff00 270px,#7fff00 355px,#80ff00 356px)"></i><i style="top:288px;left:1162.4px;width:358.7px;background:linear-gradient(90deg,#00ff43 0px,#00ff0a 235px,#03ff00 269px,#7fff00 354px,#87ff00 359px)"></i><i style="top:290px;left:1162.5px;width:361.4px;background:linear-gradient(90deg,#00ff44 0px,#00ff0b 235px,#03ff00 268px,#7eff00 352px,#8eff00 361px)"></i><i style="top:292px;left:1162.6px;width:364.1px;background:linear-gradient(90deg,#00ff45 0px,#00ff0c 234px,#03ff02 267px,#7fff00 351px,#95ff00 364px)"></i><i style="top:294px;left:1162.7px;width:366.8px;background:linear-gradient(90deg,#00ff46 0px,#00ff0e 234px,#04ff03 267px,#80ff00 350px,#9dff00 367px)"></i><i style="top:296px;left:1162.9px;width:369.5px;background:linear-gradient(90deg,#00ff48 0px,#00ff0f 233px,#04ff04 266px,#80ff00 349px,#a4ff00 370px)"></i><i style="top:298px;left:1163.0px;width:372.2px;background:linear-gradient(90deg,#00ff49 0px,#00ff11 232px,#04ff06 265px,#48ff00 313px,#acff00 372px)"></i><i style="top:300px;left:1163.1px;width:374.9px;background:linear-gradient(90deg,#00ff4a 0px,#00ff12 232px,#04ff07 264px,#40ff00 306px,#b4ff00 375px)"></i><i style="top:302px;left:1163.3px;width:377.6px;background:linear-gradient(90deg,#00ff4b 0px,#00ff14 231px,#04ff09 263px,#43ff00 307px,#bcff00 378px)"></i><i style="top:304px;left:1163.4px;width:380.3px;background:linear-gradient(90deg,#00ff4d 0px,#00ff15 231px,#04ff0b 262px,#46ff00 308px,#c4ff00 380px)"></i><i style="top:306px;left:1163.6px;width:383.0px;background:linear-gradient(90deg,#00ff4e 0px,#00ff17 230px,#04ff0c 261px,#4bff00 310px,#cbff00 382px,#cdff00 383px)"></i><i style="top:308px;left:1163.8px;width:385.6px;background:linear-gradient(90deg,#00ff4f 0px,#00ff18 230px,#04ff0e 260px,#52ff00 313px,#d3ff00 384px,#d6ff00 386px)"></i><i style="top:310px;left:1163.9px;width:388.3px;background:linear-gradient(90deg,#00ff51 0px,#00ff1a 229px,#04ff10 259px,#58ff00 315px,#d8ff00 385px,#dfff00 388px)"></i><i style="top:312px;left:1164.1px;width:390.9px;background:linear-gradient(90deg,#00ff52 0px,#00ff1b 229px,#04ff11 258px,#5fff00 318px,#e0ff00 387px,#e8ff00 391px)"></i><i style="top:314px;left:1164.3px;width:393.5px;background:linear-gradient(90deg,#00ff53 0px,#00ff1d 228px,#04ff13 257px,#66ff00 321px,#e8ff00 389px,#f2ff00 394px)"></i><i style="top:316px;left:1164.5px;width:396.2px;background:linear-gradient(90deg,#00ff55 0px,#00ff1e 228px,#03ff15 256px,#6eff00 324px,#f0ff00 391px,#fcff00 396px)"></i><i style="top:318px;left:1164.7px;width:398.8px;background:linear-gradient(90deg,#00ff56 0px,#00ff20 227px,#03ff17 255px,#75ff00 327px,#f7ff00 392px,#fff800 399px)"></i><i style="top:320px;left:1164.9px;width:401.4px;background:linear-gradient(90deg,#00ff57 0px,#00ff22 226px,#03ff18 254px,#7dff00 330px,#fffc00 395px,#ffef00 401px)"></i><i style="top:322px;left:1165.1px;width:404.0px;background:linear-gradient(90deg,#00ff59 0px,#00ff23 226px,#03ff1a 253px,#7eff00 329px,#fffd00 393px,#ffe600 404px)"></i><i style="top:324px;left:1165.3px;width:406.6px;background:linear-gradient(90deg,#00ff5a 0px,#00ff25 225px,#03ff1c 252px,#7fff00 328px,#fffd00 391px,#ffdd00 407px)"></i><i style="top:326px;left:1165.5px;width:409.2px;background:linear-gradient(90deg,#00ff5c 0px,#00ff26 225px,#03ff1e 251px,#7eff01 326px,#fffd00 389px,#ffd500 409px)"></i><i style="top:328px;left:1165.7px;width:411.8px;background:linear-gradient(90deg,#00ff5d 0px,#00ff28 224px,#03ff20 250px,#7fff03 325px,#fffd00 387px,#ffcd00 412px)"></i><i style="top:330px;left:1166.0px;width:414.3px;background:linear-gradient(90deg,#00ff5f 0px,#00ff2a 224px,#04ff22 249px,#7eff05 323px,#d8ff00 367px,#fffb00 386px,#ffc500 414px)"></i><i style="top:332px;left:1166.2px;width:416.9px;background:linear-gradient(90deg,#00ff60 0px,#00ff2c 223px,#04ff24 248px,#7fff07 322px,#c4ff00 356px,#fffb00 384px,#ffbe00 417px)"></i><i style="top:334px;left:1166.5px;width:419.4px;background:linear-gradient(90deg,#00ff62 0px,#00ff2d 223px,#04ff25 247px,#7eff0a 320px,#c5ff00 355px,#fffb00 382px,#ffba00 417px,#ffb700 419px)"></i><i style="top:336px;left:1166.7px;width:422.0px;background:linear-gradient(90deg,#00ff63 0px,#00ff2f 223px,#04ff27 246px,#7fff0c 319px,#cdff00 357px,#fffb00 380px,#ffba00 415px,#ffb000 422px)"></i><i style="top:338px;left:1167.0px;width:424.5px;background:linear-gradient(90deg,#00ff65 0px,#00ff31 222px,#04ff29 245px,#7eff0e 317px,#d6ff00 359px,#fffc00 378px,#ffba00 413px,#ffaa00 425px)"></i><i style="top:340px;left:1167.2px;width:427.1px;background:linear-gradient(90deg,#00ff66 0px,#00ff33 222px,#04ff2b 244px,#80ff10 316px,#e1ff00 362px,#fffc00 376px,#ffba00 411px,#ffa400 427px)"></i><i style="top:342px;left:1167.5px;width:429.6px;background:linear-gradient(90deg,#00ff68 0px,#00ff35 221px,#04ff2d 243px,#7fff13 314px,#eaff00 364px,#fffc00 374px,#ffbb00 408px,#ff9e00 430px)"></i><i style="top:344px;left:1167.7px;width:432.1px;background:linear-gradient(90deg,#00ff69 0px,#00ff36 221px,#04ff30 242px,#80ff15 313px,#f6ff00 367px,#fffa00 373px,#ffb900 407px,#ff9800 432px)"></i><i style="top:346px;left:1168.0px;width:434.6px;background:linear-gradient(90deg,#00ff6b 0px,#00ff38 220px,#04ff32 241px,#7fff17 311px,#fffc00 370px,#ffba00 404px,#ff9200 435px)"></i><i style="top:348px;left:1168.3px;width:437.1px;background:linear-gradient(90deg,#00ff6d 0px,#00ff3a 220px,#04ff34 240px,#80ff19 310px,#fffc00 368px,#ffba00 402px,#ff8d00 437px)"></i><i style="top:350px;left:1168.6px;width:439.6px;background:linear-gradient(90deg,#00ff6e 0px,#00ff3c 220px,#04ff36 239px,#7fff1c 308px,#fffc01 366px,#ffbb00 399px,#ff8800 440px)"></i><i style="top:352px;left:1168.9px;width:442.1px;background:linear-gradient(90deg,#00ff70 0px,#00ff3e 219px,#05ff38 238px,#80ff1e 307px,#fffc03 364px,#ffbb00 397px,#ff8300 442px)"></i><i style="top:354px;left:1169.2px;width:444.6px;background:linear-gradient(90deg,#00ff72 0px,#00ff40 219px,#03ff3b 236px,#7dff21 304px,#fffc06 362px,#ffbd00 393px,#ff8200 440px,#ff7e00 445px)"></i><i style="top:356px;left:1169.5px;width:447.1px;background:linear-gradient(90deg,#00ff73 0px,#00ff42 219px,#03ff3d 235px,#7fff24 303px,#fffc09 360px,#ffc000 389px,#ff8600 434px,#ff7900 447px)"></i><i style="top:358px;left:1169.8px;width:449.6px;background:linear-gradient(90deg,#00ff75 0px,#00ff44 218px,#03ff3f 234px,#7eff27 301px,#fffc0c 358px,#ffbb00 390px,#ff8000 437px,#ff7500 450px)"></i><i style="top:360px;left:1170.2px;width:452.0px;background:linear-gradient(90deg,#00ff77 0px,#00ff46 218px,#04ff41 233px,#7fff29 300px,#fffc0f 356px,#ffbb00 388px,#ff8100 434px,#ff7100 452px)"></i><i style="top:362px;left:1170.5px;width:454.5px;background:linear-gradient(90deg,#00ff79 0px,#00ff48 218px,#04ff44 232px,#7eff2c 298px,#fffc12 354px,#ffba00 386px,#ff8000 432px,#ff6c00 455px)"></i><i style="top:364px;left:1170.8px;width:457.0px;background:linear-gradient(90deg,#00ff7b 0px,#00ff4a 217px,#04ff46 231px,#80ff2e 297px,#fffc15 352px,#ffba02 384px,#ff8000 430px,#ff6800 457px)"></i><i style="top:366px;left:1171.2px;width:459.4px;background:linear-gradient(90deg,#00ff7c 0px,#00ff4d 217px,#04ff48 230px,#7fff31 295px,#fffc18 350px,#ffbb05 381px,#ff8200 425px,#ff6400 459px)"></i><i style="top:368px;left:1171.5px;width:461.9px;background:linear-gradient(90deg,#00ff7e 0px,#00ff4f 217px,#04ff4b 229px,#80ff34 294px,#fffc1b 348px,#ffbb08 379px,#ff8c00 413px,#ff6100 462px)"></i><i style="top:370px;left:1171.8px;width:464.3px;background:linear-gradient(90deg,#00ff80 0px,#00ff51 217px,#05ff4d 228px,#7fff37 292px,#fffc1e 346px,#ffba0a 377px,#ff8a00 412px,#ff5d00 464px)"></i><i style="top:372px;left:1172.2px;width:466.8px;background:linear-gradient(90deg,#00ff82 0px,#00ff53 216px,#05ff50 227px,#81ff39 291px,#fffb21 344px,#ffba0c 375px,#ff8500 414px,#ff5900 467px)"></i><i style="top:374px;left:1172.5px;width:469.2px;background:linear-gradient(90deg,#00ff84 0px,#00ff55 216px,#05ff52 226px,#80ff3c 289px,#fffb24 342px,#ffb90f 373px,#ff8100 416px,#ff5600 469px)"></i><i style="top:376px;left:1172.9px;width:471.6px;background:linear-gradient(90deg,#00ff86 0px,#00ff58 216px,#05ff55 225px,#81ff3f 288px,#fffb28 340px,#ffba12 370px,#ff8000 414px,#ff5200 472px)"></i><i style="top:378px;left:1173.3px;width:474.1px;background:linear-gradient(90deg,#00ff88 0px,#00ff5a 216px,#07ff57 225px,#83ff42 287px,#fffb2b 338px,#ffba14 368px,#ff7f00 412px,#ff4f00 474px)"></i><i style="top:380px;left:1173.6px;width:476.5px;background:linear-gradient(90deg,#00ff8a 0px,#00ff5c 216px,#0bff59 226px,#87ff44 287px,#fffe2f 335px,#ffbd18 364px,#ff8303 406px,#ff5000 470px,#ff4c00 477px)"></i><i style="top:382px;left:1174.0px;width:479.0px;background:linear-gradient(90deg,#00ff8c 0px,#00ff5f 216px,#20ff59 236px,#9dff44 295px,#fffe33 333px,#ffbc1b 362px,#ff8205 404px,#ff5500 458px,#ff4900 479px)"></i><i style="top:384px;left:1174.4px;width:481.4px;background:linear-gradient(90deg,#00ff8e 0px,#00ff61 216px,#61ff51 267px,#e2ff3c 320px,#fffb35 332px,#ffba1d 361px,#ff8007 403px,#ff5c00 445px,#ff4600 481px)"></i><i style="top:386px;left:1174.8px;width:483.8px;background:linear-gradient(90deg,#00ff90 0px,#00ff64 216px,#79ff50 276px,#fbff3b 327px,#ffb31c 363px,#ff7906 407px,#ff5500 453px,#ff4300 484px)"></i><i style="top:388px;left:1175.1px;width:486.2px;background:linear-gradient(90deg,#00ff92 0px,#02ff66 216px,#7dff53 276px,#fffd3d 327px,#ffbb23 356px,#ff800b 398px,#ff5900 443px,#ff4000 486px)"></i><i style="top:390px;left:1175.5px;width:488.6px;background:linear-gradient(90deg,#00ff94 0px,#02ff69 215px,#7eff56 275px,#fffd41 325px,#ffbc26 353px,#ff810e 394px,#ff5600 444px,#ff3d00 489px)"></i><i style="top:392px;left:1175.9px;width:491.1px;background:linear-gradient(90deg,#00ff97 0px,#02ff6c 214px,#7dff59 273px,#fffc44 323px,#ffbb29 351px,#ff8110 392px,#ff5300 446px,#ff3a00 491px)"></i><i style="top:394px;left:1176.3px;width:493.5px;background:linear-gradient(90deg,#00ff99 0px,#03ff6f 213px,#7dff5d 271px,#fffc48 321px,#ffbb2c 349px,#ff8112 389px,#ff4f00 449px,#ff3800 493px)"></i><i style="top:396px;left:1176.7px;width:495.9px;background:linear-gradient(90deg,#00ff9b 0px,#03ff72 212px,#7eff60 270px,#fffc4c 319px,#ffba2e 347px,#ff8014 387px,#ff4e00 448px,#ff3500 496px)"></i><i style="top:398px;left:1177.1px;width:498.3px;background:linear-gradient(90deg,#00ff9d 0px,#04ff75 211px,#7dff64 268px,#fffc50 317px,#ffba31 345px,#ff8017 385px,#ff4d00 446px,#ff3300 498px)"></i><i style="top:400px;left:1177.5px;width:500.7px;background:linear-gradient(90deg,#00ffa0 0px,#02ff79 209px,#7dff68 266px,#fffb54 315px,#ffbb35 342px,#ff811a 381px,#ff4e01 441px,#ff3000 501px)"></i><i style="top:402px;left:1177.9px;width:503.0px;background:linear-gradient(90deg,#00ffa2 0px,#02ff7c 208px,#7eff6b 265px,#fffe59 312px,#ffbc39 339px,#ff821c 378px,#ff4f04 437px,#ff2e00 503px)"></i><i style="top:404px;left:1178.4px;width:505.4px;background:linear-gradient(90deg,#00ffa5 0px,#03ff7f 207px,#7eff6f 263px,#fffe5d 310px,#ffbb3c 337px,#ff811f 376px,#ff4e05 435px,#ff2c00 505px,#ff2b00 505px)"></i><i style="top:406px;left:1178.8px;width:507.8px;background:linear-gradient(90deg,#00ffa7 0px,#03ff82 206px,#7dff73 261px,#fffd61 308px,#ffbd40 334px,#ff8222 372px,#ff4f08 430px,#ff3400 481px,#ff2900 508px)"></i><i style="top:408px;left:1179.2px;width:510.2px;background:linear-gradient(90deg,#00ffaa 0px,#04ff86 205px,#7fff76 260px,#fffd65 306px,#ffbc43 332px,#ff8124 370px,#ff4e09 428px,#ff3300 480px,#ff2700 510px)"></i><i style="top:410px;left:1179.6px;width:512.5px;background:linear-gradient(90deg,#00ffac 0px,#02ff8a 203px,#7eff7a 258px,#fffd69 304px,#ffbb46 330px,#ff8126 368px,#ff4e0b 425px,#ff3100 480px,#ff2500 513px)"></i><i style="top:412px;left:1180.1px;width:514.8px;background:linear-gradient(90deg,#00ffaf 0px,#02ff8d 202px,#7dff7f 256px,#fffc6e 302px,#ffbb49 328px,#ff8129 365px,#ff4e0d 422px,#ff2f00 482px,#ff2300 515px)"></i><i style="top:414px;left:1180.5px;width:517.2px;background:linear-gradient(90deg,#00ffb1 0px,#03ff91 201px,#7fff82 255px,#fffc72 300px,#ffba4d 326px,#ff802c 363px,#ff4d0f 420px,#ff2c00 484px,#ff2000 517px)"></i><i style="top:416px;left:1180.9px;width:519.5px;background:linear-gradient(90deg,#00ffb4 0px,#03ff94 200px,#7eff87 253px,#fffb76 298px,#ffbb51 323px,#ff812f 360px,#ff4e11 416px,#ff2a00 486px,#ff1e00 520px)"></i><i style="top:418px;left:1181.4px;width:521.9px;background:linear-gradient(90deg,#00ffb7 0px,#02ff98 198px,#7eff8b 251px,#fffe7d 295px,#ffbc55 320px,#ff8233 356px,#ff4f14 411px,#ff2800 488px,#ff1c00 522px)"></i><i style="top:420px;left:1181.8px;width:524.2px;background:linear-gradient(90deg,#00ffb9 0px,#02ff9c 197px,#7dff8f 249px,#fffe81 293px,#ffbc59 318px,#ff8135 354px,#ff4e16 409px,#ff2600 490px,#ff1a00 524px)"></i><i style="top:422px;left:1182.3px;width:526.6px;background:linear-gradient(90deg,#00ffbc 0px,#03ffa0 196px,#7fff94 248px,#fffd86 291px,#ffbb5c 316px,#ff8038 352px,#ff4d17 407px,#ff2300 492px,#ff1900 527px)"></i><i style="top:424px;left:1182.8px;width:528.9px;background:linear-gradient(90deg,#00ffbf 0px,#03ffa4 195px,#7eff98 246px,#fffd8b 289px,#ffbc61 313px,#ff823c 348px,#ff4f1b 401px,#ff2300 488px,#ff1700 529px)"></i><i style="top:426px;left:1183.2px;width:531.2px;background:linear-gradient(90deg,#00ffc2 0px,#02ffa8 193px,#7dff9d 244px,#fffc8f 287px,#ffbb65 311px,#ff813e 346px,#ff4e1d 399px,#ff2300 486px,#ff1500 531px)"></i><i style="top:428px;left:1183.7px;width:533.5px;background:linear-gradient(90deg,#00ffc5 0px,#02ffac 192px,#7dffa2 242px,#fffb94 285px,#ffba68 309px,#ff8041 344px,#ff4d1e 397px,#ff2201 484px,#ff1300 534px)"></i><i style="top:430px;left:1184.2px;width:535.9px;background:linear-gradient(90deg,#00ffc8 0px,#03ffb0 191px,#7fffa6 241px,#fffe9b 282px,#ffbe6f 305px,#ff8346 339px,#ff5023 390px,#ff2405 473px,#ff1100 536px)"></i><i style="top:432px;left:1184.7px;width:538.2px;background:linear-gradient(90deg,#00ffcb 0px,#04ffb4 190px,#7effab 239px,#fffea0 280px,#ffbd72 303px,#ff834a 336px,#ff5025 387px,#ff2406 470px,#ff1000 537px,#ff1000 538px)"></i><i style="top:434px;left:1185.2px;width:540.5px;background:linear-gradient(90deg,#00ffce 0px,#02ffb9 188px,#7effb0 237px,#fffda5 278px,#ffbc76 301px,#ff824c 334px,#ff4f27 385px,#ff2307 468px,#ff1000 531px,#ff0e00 540px)"></i><i style="top:436px;left:1185.7px;width:542.8px;background:linear-gradient(90deg,#00ffd1 0px,#03ffbd 187px,#7dffb5 235px,#fffdab 276px,#ffbb7a 299px,#ff814f 332px,#ff4f29 382px,#ff2309 464px,#ff1000 527px,#ff0c00 543px)"></i><i style="top:438px;left:1186.2px;width:545.1px;background:linear-gradient(90deg,#00ffd4 0px,#03ffc2 186px,#7fffba 234px,#fffcb0 274px,#ffba7e 297px,#ff8052 330px,#ff4e2b 380px,#ff220a 462px,#ff0f00 528px,#ff0b00 545px)"></i><i style="top:440px;left:1186.7px;width:547.4px;background:linear-gradient(90deg,#00ffd7 0px,#02ffc7 184px,#7cffc0 231px,#fffbb5 272px,#ffb982 295px,#ff7f55 328px,#ff4d2d 378px,#ff220c 460px,#ff0d00 530px,#ff0900 547px)"></i><i style="top:442px;left:1187.2px;width:549.7px;background:linear-gradient(90deg,#00ffdb 0px,#02ffcb 183px,#7effc5 230px,#fffebd 269px,#ffbd89 291px,#ff825b 323px,#ff4f32 372px,#ff230f 451px,#ff0c00 530px,#ff0700 550px)"></i><i style="top:444px;left:1187.7px;width:552.0px;background:linear-gradient(90deg,#00ffde 0px,#03ffd0 182px,#7dffca 228px,#fffdc3 267px,#ffbc8d 289px,#ff815e 321px,#ff4f34 369px,#ff2311 448px,#ff0a00 532px,#ff0600 552px)"></i><i style="top:446px;left:1188.2px;width:554.3px;background:linear-gradient(90deg,#00ffe1 0px,#04ffd5 181px,#80ffd0 227px,#fffcc8 265px,#ffbb91 287px,#ff8060 319px,#ff4e36 367px,#ff2212 446px,#ff0800 535px,#ff0400 554px)"></i><i style="top:448px;left:1188.7px;width:556.6px;background:linear-gradient(90deg,#00ffe5 0px,#02ffda 179px,#7cffd6 224px,#fffcce 263px,#ffba96 285px,#ff8065 316px,#ff4d39 364px,#ff2214 442px,#ff0700 537px,#ff0300 557px)"></i><i style="top:450px;left:1189.3px;width:558.9px;background:linear-gradient(90deg,#00ffe9 0px,#03ffdf 178px,#7effdc 223px,#ffffd7 260px,#ffbd9e 281px,#ff846b 311px,#ff503f 357px,#ff2418 432px,#ff0600 536px,#ff0100 559px)"></i><i style="top:452px;left:1189.8px;width:561.1px;background:linear-gradient(90deg,#00ffec 0px,#04ffe5 177px,#7effe2 221px,#fffedd 258px,#ffbca2 279px,#ff826f 309px,#ff4f41 355px,#ff241a 430px,#ff0400 538px,#ff0000 561px)"></i><i style="top:454px;left:1190.3px;width:563.4px;background:linear-gradient(90deg,#00fff0 0px,#02ffea 175px,#7dffe8 219px,#fffde3 256px,#ffbba7 277px,#ff8172 307px,#ff4e43 353px,#ff231b 428px,#ff0300 540px,#ff0000 563px)"></i><i style="top:456px;left:1190.9px;width:565.7px;background:linear-gradient(90deg,#00fff4 0px,#03fff0 174px,#7dffee 217px,#fffce9 254px,#ffbaab 275px,#ff8075 305px,#ff4d45 351px,#ff221c 426px,#ff0200 541px,#ff0000 566px)"></i><i style="top:458px;left:1191.4px;width:567.9px;background:linear-gradient(90deg,#00fff8 0px,#04fff5 173px,#7ffff4 216px,#fffff3 251px,#ffbeb5 271px,#ff837c 300px,#ff504b 344px,#ff2521 415px,#ff0100 537px,#ff0000 568px)"></i><i style="top:460px;left:1191.9px;width:570.2px;background:linear-gradient(90deg,#00fffc 0px,#02fffb 171px,#7bfffb 213px,#fffefa 249px,#ffbdb9 269px,#ff8280 298px,#ff4f4e 342px,#ff2322 414px,#ff0000 539px,#ff0000 570px)"></i><i style="top:462px;left:1192.5px;width:572.4px;background:linear-gradient(90deg,#00feff 0px,#03fdff 170px,#7dfcff 212px,#fff9fc 248px,#ffb9bc 268px,#ff7f82 297px,#ff4d4f 341px,#ff2224 413px,#ff0001 536px,#ff0000 572px)"></i><i style="top:464px;left:1193.1px;width:574.6px;background:linear-gradient(90deg,#00faff 0px,#03f7ff 169px,#80f6ff 212px,#fff4ff 247px,#ffb5be 267px,#ff7d83 296px,#ff4b50 340px,#ff2125 412px,#ff0002 532px,#ff0000 575px)"></i><i style="top:466px;left:1193.6px;width:576.9px;background:linear-gradient(90deg,#00f6ff 0px,#02f1ff 167px,#7cefff 210px,#ffebfd 247px,#ffafbd 267px,#ff7884 296px,#ff4851 340px,#ff1f25 412px,#ff0003 529px,#ff0000 577px)"></i><i style="top:468px;left:1194.2px;width:579.1px;background:linear-gradient(90deg,#00f2ff 0px,#03ecff 166px,#7fe9ff 210px,#ffe3fb 247px,#ffa6ba 268px,#ff7181 298px,#ff424e 344px,#ff1a23 419px,#ff0004 529px,#ff0000 579px)"></i><i style="top:470px;left:1194.8px;width:581.3px;background:linear-gradient(90deg,#00eeff 0px,#03e6ff 165px,#7ee3ff 209px,#ffdefd 246px,#ffa3bc 267px,#ff6f82 297px,#ff414f 343px,#ff1924 418px,#ff0005 524px,#ff0000 581px)"></i><i style="top:472px;left:1195.3px;width:583.5px;background:linear-gradient(90deg,#00ebff 0px,#02e1ff 163px,#7eddff 208px,#ffd6fc 246px,#ff9dbc 267px,#ff6981 298px,#ff3d4e 345px,#ff1623 422px,#ff0006 521px,#ff0000 584px)"></i><i style="top:474px;left:1195.9px;width:585.8px;background:linear-gradient(90deg,#00e7ff 0px,#03dcff 162px,#7dd7ff 207px,#ffd1fe 245px,#ff99be 266px,#ff6783 297px,#ff3b50 344px,#ff1524 420px,#ff0008 516px,#ff0000 586px)"></i><i style="top:476px;left:1196.5px;width:588.0px;background:linear-gradient(90deg,#00e3ff 0px,#03d7ff 161px,#80d1ff 207px,#ffc9fc 245px,#ff92bb 267px,#ff6080 299px,#ff364e 347px,#ff1222 426px,#ff0009 513px,#ff0000 588px)"></i><i style="top:478px;left:1197.1px;width:590.2px;background:linear-gradient(90deg,#00dfff 0px,#02d2ff 159px,#7cccff 205px,#ffc5fe 244px,#ff8ebc 266px,#ff5e82 298px,#ff344f 346px,#ff1023 425px,#ff000b 507px,#ff0000 590px)"></i><i style="top:480px;left:1197.6px;width:592.4px;background:linear-gradient(90deg,#00dbff 0px,#03cdff 158px,#7fc6ff 205px,#ffbdfd 244px,#ff89bc 266px,#ff5a82 298px,#ff314f 347px,#ff0e23 427px,#ff000c 503px,#ff0000 592px)"></i><i style="top:482px;left:1198.2px;width:594.6px;background:linear-gradient(90deg,#00d8ff 0px,#03c8ff 157px,#7ec1ff 204px,#ffb6fb 244px,#ff82b9 267px,#ff557f 300px,#ff2d4d 350px,#ff0b22 432px,#ff000e 500px,#ff0000 595px)"></i><i style="top:484px;left:1198.8px;width:596.8px;background:linear-gradient(90deg,#00d4ff 0px,#02c3ff 155px,#7ebbff 203px,#ffb1fd 243px,#ff7fbb 266px,#ff5281 299px,#ff2b4e 349px,#ff0a23 431px,#ff000f 496px,#ff0000 597px)"></i><i style="top:486px;left:1199.4px;width:599.0px;background:linear-gradient(90deg,#00d1ff 0px,#03bfff 154px,#7eb6ff 202px,#ffaafb 243px,#ff7aba 266px,#ff4f81 299px,#ff294e 350px,#ff0823 433px,#ff0010 495px,#ff0000 599px)"></i><i style="top:488px;left:1200.0px;width:601.2px;background:linear-gradient(90deg,#00cdff 0px,#04baff 153px,#80b1ff 202px,#ffa6fd 242px,#ff76bc 265px,#ff4c82 298px,#ff274f 349px,#ff0724 432px,#ff0010 495px,#ff0000 601px)"></i><i style="top:490px;left:1200.6px;width:603.4px;background:linear-gradient(90deg,#00c9ff 0px,#02b6ff 151px,#7dacff 200px,#ff9ffc 242px,#ff72bc 265px,#ff4881 299px,#ff244e 351px,#ff0523 435px,#ff0007 539px,#ff0000 603px)"></i><i style="top:492px;left:1201.2px;width:605.6px;background:linear-gradient(90deg,#00c6ff 0px,#03b1ff 150px,#7fa7ff 200px,#ff9bfd 241px,#ff6dbb 265px,#ff4581 299px,#ff214f 351px,#ff0323 436px,#ff0000 585px,#ff0000 606px)"></i><i style="top:494px;left:1201.9px;width:607.8px;background:linear-gradient(90deg,#00c2ff 0px,#04adff 149px,#7fa2ff 199px,#ff95fc 241px,#ff68bb 265px,#ff4180 300px,#ff1e4e 353px,#ff0122 440px,#ff0000 590px,#ff0000 608px)"></i><i style="top:496px;left:1202.5px;width:610.0px;background:linear-gradient(90deg,#00bfff 0px,#02a9ff 147px,#7f9dff 198px,#ff91fe 240px,#ff65bc 264px,#ff3e82 299px,#ff1d4f 352px,#ff0023 438px,#ff0000 590px,#ff0000 610px)"></i><i style="top:498px;left:1203.1px;width:612.1px;background:linear-gradient(90deg,#00bcff 0px,#03a5ff 146px,#7f99ff 197px,#ff8afc 240px,#ff61bc 264px,#ff3b82 299px,#ff1b4f 352px,#ff0024 439px,#ff0000 593px,#ff0000 612px)"></i><i style="top:500px;left:1203.8px;width:614.3px;background:linear-gradient(90deg,#00b8ff 0px,#02a1ff 144px,#7e94ff 196px,#ff86fd 239px,#ff5ebd 263px,#ff3983 298px,#ff1950 351px,#ff0025 437px,#ff0001 591px,#ff0000 614px)"></i><i style="top:502px;left:1204.4px;width:613.2px;background:linear-gradient(90deg,#00b5ff 0px,#039dff 143px,#7e90ff 195px,#ff80fc 239px,#ff58ba 264px,#ff3481 300px,#ff154e 355px,#ff0026 434px,#ff0002 586px,#ff0000 613px)"></i><i style="top:504px;left:1205.1px;width:611.0px;background:linear-gradient(90deg,#00b2ff 0px,#0499ff 142px,#7e8cff 194px,#ff7dfd 238px,#ff55bc 263px,#ff3282 299px,#ff144f 354px,#ff0029 429px,#ff0004 577px,#ff0000 611px)"></i><i style="top:506px;left:1205.7px;width:604.4px;background:linear-gradient(90deg,#00aeff 0px,#0395ff 140px,#7e87ff 193px,#ff77fc 238px,#ff51bb 263px,#ff2f81 300px,#ff114e 356px,#ff002b 424px,#ff0006 568px,#ff0000 604px)"></i><i style="top:508px;left:1206.4px;width:597.7px;background:linear-gradient(90deg,#00abff 0px,#0391ff 139px,#8083ff 193px,#ff73fd 237px,#ff4ebd 262px,#ff2c82 299px,#ff0f4f 355px,#ff002e 419px,#ff0008 559px,#ff0001 598px)"></i><i style="top:510px;left:1207.1px;width:591.0px;background:linear-gradient(90deg,#00a8ff 0px,#028eff 137px,#7d7fff 191px,#ff6dfc 237px,#ff49ba 263px,#ff2880 301px,#ff0c4d 359px,#ff002f 416px,#ff0009 554px,#ff0003 591px)"></i><i style="top:512px;left:1207.7px;width:584.3px;background:linear-gradient(90deg,#00a5ff 0px,#038aff 136px,#807bff 191px,#ff6afd 236px,#ff46bc 262px,#ff2681 300px,#ff0b4e 357px,#ff0032 411px,#ff000b 545px,#ff0004 584px)"></i><i style="top:514px;left:1208.4px;width:577.7px;background:linear-gradient(90deg,#00a2ff 0px,#0287ff 134px,#7d77ff 189px,#ff64fb 236px,#ff42bb 262px,#ff2481 300px,#ff094e 358px,#ff0033 408px,#ff000d 540px,#ff0006 578px)"></i><i style="top:516px;left:1209.1px;width:571.0px;background:linear-gradient(90deg,#009eff 0px,#0383ff 133px,#8073ff 189px,#ff61fd 235px,#ff40bc 261px,#ff2182 299px,#ff074f 357px,#ff0034 408px,#ff000d 541px,#ff0007 571px)"></i><i style="top:518px;left:1209.8px;width:564.3px;background:linear-gradient(90deg,#009bff 0px,#0480ff 132px,#806fff 188px,#ff5cfb 235px,#ff3bba 262px,#ff1e80 301px,#ff044d 361px,#ff0022 459px,#ff0009 564px)"></i><i style="top:520px;left:1210.5px;width:557.6px;background:linear-gradient(90deg,#0098ff 0px,#037dff 130px,#7f6bff 187px,#ff58fc 234px,#ff38bb 261px,#ff1c81 300px,#ff034e 359px,#ff0023 456px,#ff000b 558px)"></i><i style="top:522px;left:1211.2px;width:550.9px;background:linear-gradient(90deg,#0095ff 0px,#0479ff 129px,#7f67ff 186px,#ff55fe 233px,#ff35bc 260px,#ff1a82 299px,#ff024f 358px,#ff0024 455px,#ff000c 551px)"></i><i style="top:524px;left:1211.9px;width:544.2px;background:linear-gradient(90deg,#0092ff 0px,#0376ff 127px,#7f64ff 185px,#ff50fc 233px,#ff32bc 260px,#ff1781 300px,#ff004e 361px,#ff0023 460px,#ff000e 544px)"></i><i style="top:526px;left:1212.6px;width:537.5px;background:linear-gradient(90deg,#008fff 0px,#0473ff 126px,#7f60ff 184px,#ff4cfd 232px,#ff2ebb 260px,#ff1481 300px,#ff004e 361px,#ff0023 461px,#ff0010 537px)"></i><i style="top:528px;left:1213.4px;width:530.7px;background:linear-gradient(90deg,#008cff 0px,#0370ff 124px,#7f5dff 183px,#ff48fb 232px,#ff2bba 260px,#ff1180 301px,#ff0050 358px,#ff0025 456px,#ff0011 531px)"></i><i style="top:530px;left:1214.1px;width:524.0px;background:linear-gradient(90deg,#0089ff 0px,#046dff 123px,#7f59ff 182px,#ff44fd 231px,#ff28bb 259px,#ff0f81 300px,#ff0054 353px,#ff0028 448px,#ff0013 524px)"></i><i style="top:532px;left:1214.8px;width:517.2px;background:linear-gradient(90deg,#0086ff 0px,#036aff 121px,#7d56ff 180px,#ff41fe 230px,#ff26bd 258px,#ff0e82 299px,#ff0057 348px,#ff002b 440px,#ff0015 517px)"></i><i style="top:534px;left:1215.6px;width:510.5px;background:linear-gradient(90deg,#0083ff 0px,#0467ff 120px,#7f52ff 180px,#ff3dfc 230px,#ff22ba 259px,#ff0a80 301px,#ff005a 344px,#ff002d 434px,#ff0017 510px)"></i><i style="top:536px;left:1216.3px;width:503.7px;background:linear-gradient(90deg,#0081ff 0px,#0364ff 118px,#7d50ff 178px,#ff39fd 229px,#ff1fbb 258px,#ff0881 300px,#ff005d 341px,#ff002f 430px,#ff0019 504px)"></i><i style="top:538px;left:1217.1px;width:497.0px;background:linear-gradient(90deg,#007eff 0px,#0461ff 117px,#804cff 178px,#ff35fb 229px,#ff1cbb 258px,#ff0681 300px,#ff005c 343px,#ff002e 434px,#ff001b 497px)"></i><i style="top:540px;left:1217.9px;width:490.2px;background:linear-gradient(90deg,#007bff 0px,#035eff 115px,#7d49ff 176px,#ff32fc 228px,#ff1abc 257px,#ff0482 299px,#ff004f 363px,#ff0023 468px,#ff001d 490px)"></i><i style="top:542px;left:1218.6px;width:483.4px;background:linear-gradient(90deg,#0078ff 0px,#045bff 114px,#8046ff 176px,#ff2ffd 227px,#ff17bd 256px,#ff0383 298px,#ff0050 362px,#ff0024 466px,#ff001f 483px)"></i><i style="top:544px;left:1219.4px;width:476.7px;background:linear-gradient(90deg,#0075ff 0px,#0358ff 112px,#7e43ff 174px,#ff2bfc 227px,#ff14ba 257px,#ff0080 300px,#ff004e 366px,#ff0022 474px,#ff0022 477px)"></i><i style="top:546px;left:1220.2px;width:469.8px;background:linear-gradient(90deg,#0072ff 0px,#0456ff 111px,#803fff 174px,#ff28fd 226px,#ff12bb 256px,#ff0081 299px,#ff004e 365px,#ff0024 470px)"></i><i style="top:548px;left:1221.0px;width:463.0px;background:linear-gradient(90deg,#0070ff 0px,#0353ff 109px,#7e3dff 172px,#ff25fd 225px,#ff0fbc 255px,#ff0082 298px,#ff004f 364px,#ff0026 463px)"></i><i style="top:550px;left:1221.9px;width:456.2px;background:linear-gradient(90deg,#006dff 0px,#0251ff 107px,#7e3aff 171px,#ff21fc 225px,#ff0cba 256px,#ff0086 294px,#ff0053 358px,#ff0029 456px)"></i><i style="top:552px;left:1222.7px;width:449.4px;background:linear-gradient(90deg,#006aff 0px,#034eff 106px,#7e37ff 170px,#ff1efc 224px,#ff09bb 255px,#ff008b 290px,#ff0056 353px,#ff002b 449px)"></i><i style="top:554px;left:1223.5px;width:442.5px;background:linear-gradient(90deg,#0068ff 0px,#034bff 104px,#7f34ff 169px,#ff1bfd 223px,#ff07bb 254px,#ff008d 288px,#ff0058 350px,#ff002e 443px)"></i><i style="top:556px;left:1224.4px;width:435.7px;background:linear-gradient(90deg,#0065ff 0px,#0449ff 103px,#7f31ff 168px,#ff17fb 223px,#ff04bb 254px,#ff0081 299px,#ff004e 368px,#ff0030 436px)"></i><i style="top:558px;left:1225.3px;width:428.8px;background:linear-gradient(90deg,#0062ff 0px,#0346ff 101px,#7f2eff 167px,#ff14fc 222px,#ff02ba 254px,#ff0080 300px,#ff004d 370px,#ff0033 429px)"></i><i style="top:560px;left:1226.2px;width:421.9px;background:linear-gradient(90deg,#0060ff 0px,#0344ff 99px,#7d2cff 165px,#ff11fd 221px,#ff00bb 253px,#ff0080 299px,#ff004e 369px,#ff0036 422px)"></i><i style="top:562px;left:1227.1px;width:415.0px;background:linear-gradient(90deg,#005dff 0px,#0441ff 98px,#8028ff 165px,#ff0efd 220px,#ff00bb 252px,#ff0081 298px,#ff004e 368px,#ff0039 415px)"></i><i style="top:564px;left:1228.0px;width:408.1px;background:linear-gradient(90deg,#005aff 0px,#033fff 96px,#7e26ff 163px,#ff0bfb 220px,#ff00be 250px,#ff0083 296px,#ff0050 366px,#ff003c 408px)"></i><i style="top:566px;left:1228.9px;width:401.1px;background:linear-gradient(90deg,#0058ff 0px,#033dff 94px,#7f23ff 162px,#ff08fc 219px,#ff00c2 247px,#ff0087 292px,#ff0053 360px,#ff003f 401px)"></i><i style="top:568px;left:1229.9px;width:394.2px;background:linear-gradient(90deg,#0055ff 0px,#043aff 93px,#7f21ff 161px,#ff05fc 218px,#ff00ba 251px,#ff0081 298px,#ff004e 370px,#ff0042 394px)"></i><i style="top:570px;left:1230.8px;width:387.2px;background:linear-gradient(90deg,#0053ff 0px,#0338ff 91px,#801eff 160px,#ff03fd 217px,#ff00bb 250px,#ff0080 298px,#ff004d 371px,#ff0046 387px)"></i><i style="top:572px;left:1231.8px;width:380.3px;background:linear-gradient(90deg,#0050ff 0px,#0336ff 89px,#7e1cff 158px,#ff00fd 216px,#ff00bc 249px,#ff0081 297px,#ff004e 370px,#ff0049 380px)"></i><i style="top:574px;left:1232.8px;width:373.3px;background:linear-gradient(90deg,#004eff 0px,#0334ff 87px,#7f19ff 157px,#ff00fd 215px,#ff00bc 248px,#ff0082 296px,#ff004f 369px,#ff004d 373px)"></i><i style="top:576px;left:1233.7px;width:366.3px;background:linear-gradient(90deg,#004bff 0px,#0432ff 86px,#7f17ff 156px,#fe00ff 213px,#ff00ba 249px,#ff0080 298px,#ff0050 366px)"></i><i style="top:578px;left:1234.7px;width:359.3px;background:linear-gradient(90deg,#0049ff 0px,#0330ff 84px,#8014ff 155px,#f400ff 208px,#ff00f9 215px,#ff00b9 249px,#ff007e 299px,#ff0054 359px)"></i><i style="top:580px;left:1235.7px;width:352.3px;background:linear-gradient(90deg,#0046ff 0px,#032eff 82px,#7e12ff 153px,#e700ff 202px,#ff00fc 213px,#ff00bb 247px,#ff0081 296px,#ff0058 352px)"></i><i style="top:582px;left:1236.7px;width:345.3px;background:linear-gradient(90deg,#0044ff 0px,#032cff 80px,#7f10ff 152px,#dc00ff 196px,#ff00fc 212px,#ff00bb 246px,#ff0082 295px,#ff005c 345px)"></i><i style="top:584px;left:1237.7px;width:338.3px;background:linear-gradient(90deg,#0041ff 0px,#0429ff 79px,#7f0dff 151px,#d300ff 191px,#ff00fd 211px,#ff00bc 245px,#ff0081 295px,#ff0061 338px)"></i><i style="top:586px;left:1238.7px;width:331.3px;background:linear-gradient(90deg,#003fff 0px,#0327ff 77px,#800bff 150px,#ca00ff 186px,#ff00fd 210px,#ff00bb 245px,#ff0081 295px,#ff0065 331px)"></i><i style="top:588px;left:1239.7px;width:324.3px;background:linear-gradient(90deg,#003cff 0px,#0325ff 75px,#7e09ff 148px,#c300ff 182px,#ff00fb 210px,#ff00ba 245px,#ff0080 296px,#ff006a 324px)"></i><i style="top:590px;left:1240.8px;width:317.3px;background:linear-gradient(90deg,#003aff 0px,#0323ff 73px,#7f07ff 147px,#c600ff 182px,#ff00fb 209px,#ff00bb 244px,#ff0081 295px,#ff006f 317px)"></i><i style="top:592px;left:1241.8px;width:310.3px;background:linear-gradient(90deg,#0038ff 0px,#0421ff 72px,#7f04ff 146px,#ff00fc 208px,#ff00ba 244px,#ff007f 296px,#ff0074 310px)"></i><i style="top:594px;left:1242.8px;width:303.2px;background:linear-gradient(90deg,#0035ff 0px,#041fff 70px,#8002ff 145px,#ff00fc 207px,#ff00ba 243px,#ff0080 295px,#ff0079 303px)"></i><i style="top:596px;left:1243.9px;width:296.2px;background:linear-gradient(90deg,#0033ff 0px,#031eff 68px,#7f00ff 143px,#ff00fc 206px,#ff00bb 242px,#ff0081 294px,#ff007f 296px)"></i><i style="top:598px;left:1244.9px;width:289.1px;background:linear-gradient(90deg,#0031ff 0px,#031cff 66px,#7f00ff 142px,#ff00fc 205px,#ff00bb 241px,#ff0085 289px)"></i><i style="top:600px;left:1246.0px;width:282.0px;background:linear-gradient(90deg,#002eff 0px,#031aff 64px,#7e00ff 140px,#ff00fc 204px,#ff00bb 240px,#ff008b 282px)"></i><i style="top:602px;left:1247.1px;width:274.9px;background:linear-gradient(90deg,#002cff 0px,#0418ff 63px,#7900ff 136px,#ff00fc 203px,#ff00ba 240px,#ff0091 275px)"></i><i style="top:604px;left:1248.2px;width:267.8px;background:linear-gradient(90deg,#002aff 0px,#0416ff 61px,#7300ff 131px,#f600ff 197px,#ff00f8 204px,#ff00b7 242px,#ff0098 268px)"></i><i style="top:606px;left:1249.4px;width:260.7px;background:linear-gradient(90deg,#0027ff 0px,#0414ff 59px,#6b00ff 125px,#ed00ff 192px,#ff00fa 202px,#ff00b8 240px,#ff009f 261px)"></i><i style="top:608px;left:1250.5px;width:253.6px;background:linear-gradient(90deg,#0025ff 0px,#0413ff 57px,#6300ff 119px,#e500ff 187px,#ff00fa 201px,#ff00b9 239px,#ff00a6 254px)"></i><i style="top:610px;left:1251.7px;width:246.4px;background:linear-gradient(90deg,#0023ff 0px,#0311ff 55px,#5c00ff 113px,#dd00ff 182px,#ff00fc 199px,#ff00ba 237px,#ff00ae 246px)"></i><i style="top:612px;left:1252.8px;width:239.2px;background:linear-gradient(90deg,#0021ff 0px,#030fff 53px,#5400ff 107px,#d500ff 177px,#ff00fc 198px,#ff00bb 236px,#ff00b6 239px)"></i><i style="top:614px;left:1254.0px;width:232.0px;background:linear-gradient(90deg,#001eff 0px,#030eff 51px,#4f00ff 102px,#cf00ff 173px,#ff00fc 197px,#ff00bf 232px)"></i><i style="top:616px;left:1255.2px;width:224.8px;background:linear-gradient(90deg,#001cff 0px,#030cff 49px,#4a00ff 97px,#c900ff 169px,#ff00fc 196px,#ff00c8 225px)"></i><i style="top:618px;left:1256.4px;width:217.6px;background:linear-gradient(90deg,#001aff 0px,#030aff 47px,#4300ff 91px,#c200ff 164px,#ff00fc 195px,#ff00d2 218px)"></i><i style="top:620px;left:1257.7px;width:210.4px;background:linear-gradient(90deg,#0018ff 0px,#0309ff 45px,#3f00ff 87px,#bf00ff 161px,#ff00fc 194px,#ff00dd 210px)"></i><i style="top:622px;left:1258.9px;width:203.1px;background:linear-gradient(90deg,#0015ff 0px,#0307ff 43px,#4100ff 86px,#bf00ff 160px,#ff00fc 193px,#ff00e8 203px)"></i><i style="top:624px;left:1260.2px;width:195.9px;background:linear-gradient(90deg,#0013ff 0px,#0305ff 41px,#4e00ff 93px,#cf00ff 167px,#ff00fb 192px,#ff00f3 196px)"></i><i style="top:626px;left:1261.5px;width:188.5px;background:linear-gradient(90deg,#0011ff 0px,#0304ff 39px,#8000ff 122px,#fe00ff 189px)"></i><i style="top:628px;left:1262.9px;width:181.2px;background:linear-gradient(90deg,#000fff 0px,#0302ff 37px,#7f00ff 120px,#f100ff 181px)"></i><i style="top:630px;left:1264.3px;width:173.7px;background:linear-gradient(90deg,#000cff 0px,#0401ff 35px,#8000ff 119px,#e500ff 174px)"></i><i style="top:632px;left:1265.8px;width:166.2px;background:linear-gradient(90deg,#000aff 0px,#0400ff 33px,#8000ff 117px,#d900ff 166px)"></i><i style="top:634px;left:1267.4px;width:158.6px;background:linear-gradient(90deg,#0008ff 0px,#0300ff 30px,#8000ff 115px,#cd00ff 159px)"></i><i style="top:636px;left:1269.1px;width:151.0px;background:linear-gradient(90deg,#0006ff 0px,#0400ff 28px,#8000ff 113px,#c200ff 151px)"></i><i style="top:638px;left:1270.8px;width:143.2px;background:linear-gradient(90deg,#0003ff 0px,#0400ff 26px,#8000ff 111px,#b700ff 143px)"></i><i style="top:640px;left:1272.6px;width:135.4px;background:linear-gradient(90deg,#0001ff 0px,#0400ff 23px,#8000ff 109px,#ad00ff 135px)"></i><i style="top:642px;left:1274.5px;width:127.6px;background:linear-gradient(90deg,#0000ff 0px,#0500ff 21px,#8000ff 107px,#a200ff 128px)"></i><i style="top:644px;left:1276.4px;width:119.6px;background:linear-gradient(90deg,#0000ff 0px,#0400ff 18px,#8000ff 105px,#9800ff 120px)"></i><i style="top:646px;left:1278.4px;width:111.6px;background:linear-gradient(90deg,#0000ff 0px,#0500ff 16px,#8100ff 103px,#8f00ff 112px)"></i><i style="top:648px;left:1280.4px;width:103.6px;background:linear-gradient(90deg,#0000ff 0px,#0500ff 13px,#8100ff 101px,#8500ff 104px)"></i><i style="top:650px;left:1282.5px;width:95.5px;background:linear-gradient(90deg,#0000ff 0px,#0700ff 12px,#7c00ff 96px)"></i><i style="top:652px;left:1284.7px;width:87.4px;background:linear-gradient(90deg,#0000ff 0px,#2e00ff 39px,#7300ff 87px)"></i><i style="top:654px;left:1286.9px;width:79.1px;background:linear-gradient(90deg,#0000ff 0px,#6b00ff 79px)"></i><i style="top:656px;left:1289.3px;width:70.7px;background:linear-gradient(90deg,#0400ff 0px,#6200ff 71px)"></i><i style="top:658px;left:1292.2px;width:61.8px;background:linear-gradient(90deg,#0800ff 0px,#5a00ff 62px)"></i><i style="top:660px;left:1295.5px;width:52.6px;background:linear-gradient(90deg,#0d00ff 0px,#5200ff 53px)"></i><i style="top:662px;left:1298.7px;width:43.3px;background:linear-gradient(90deg,#1200ff 0px,#4a00ff 43px)"></i><i style="top:664px;left:1301.9px;width:34.2px;background:linear-gradient(90deg,#1700ff 0px,#4300ff 34px)"></i><i style="top:666px;left:1305.1px;width:24.9px;background:linear-gradient(90deg,#1b00ff 0px,#3b00ff 25px)"></i><i style="top:668px;left:1308.2px;width:15.8px;background:linear-gradient(90deg,#2000ff 0px,#3400ff 16px)"></i></div>
<div id="ins"><i style="top:144.4px;left:1649.2px;width:250.0px;height:3.3px;background:linear-gradient(90deg,#86ffcc 0px,#fcffc6 198px,#ffe3af 250px)"></i><i style="top:147.4px;left:1649.2px;width:250.0px;height:3.3px;background:linear-gradient(90deg,#87ffcd 0px,#fffdc6 204px,#ffe1af 250px)"></i><i style="top:150.4px;left:1649.2px;width:250.0px;height:3.3px;background:linear-gradient(90deg,#88ffcf 0px,#fffdc7 202px,#ffe0b0 250px)"></i><i style="top:153.4px;left:1649.2px;width:250.0px;height:3.3px;background:linear-gradient(90deg,#89ffd0 0px,#fffcc9 200px,#ffdfb0 250px)"></i><i style="top:156.4px;left:1649.2px;width:250.0px;height:3.3px;background:linear-gradient(90deg,#8affd1 0px,#fffcca 198px,#ffddb0 250px)"></i><i style="top:159.4px;left:1649.2px;width:250.0px;height:3.3px;background:linear-gradient(90deg,#8bffd3 0px,#fffdcd 194px,#ffdcb0 250px)"></i><i style="top:162.4px;left:1649.2px;width:250.0px;height:3.3px;background:linear-gradient(90deg,#8cffd4 0px,#fffdce 192px,#ffdab1 250px)"></i><i style="top:165.4px;left:1649.2px;width:250.0px;height:3.3px;background:linear-gradient(90deg,#8dffd6 0px,#fffccf 190px,#ffd9b1 250px)"></i><i style="top:168.4px;left:1649.2px;width:250.0px;height:3.3px;background:linear-gradient(90deg,#8fffd7 0px,#fffcd1 188px,#ffd8b1 250px)"></i><i style="top:171.4px;left:1649.2px;width:250.0px;height:3.3px;background:linear-gradient(90deg,#90ffd9 0px,#fffdd3 184px,#ffd6b2 250px)"></i><i style="top:174.4px;left:1649.2px;width:250.0px;height:3.3px;background:linear-gradient(90deg,#91ffda 0px,#fffdd5 182px,#ffd5b2 250px)"></i><i style="top:177.4px;left:1649.2px;width:250.0px;height:3.3px;background:linear-gradient(90deg,#92ffdc 0px,#fffcd6 180px,#ffd4b2 250px)"></i><i style="top:180.4px;left:1649.2px;width:250.0px;height:3.3px;background:linear-gradient(90deg,#93ffdd 0px,#fffcd7 178px,#ffd2b2 250px)"></i><i style="top:183.4px;left:1649.2px;width:250.0px;height:3.3px;background:linear-gradient(90deg,#94ffdf 0px,#fffcd9 176px,#ffd1b3 250px)"></i><i style="top:186.4px;left:1649.2px;width:250.0px;height:3.3px;background:linear-gradient(90deg,#95ffe0 0px,#fffddc 172px,#ffcfb3 250px)"></i><i style="top:189.4px;left:1649.2px;width:250.0px;height:3.3px;background:linear-gradient(90deg,#96ffe2 0px,#fffddd 170px,#ffceb3 250px)"></i><i style="top:192.4px;left:1649.2px;width:250.0px;height:3.3px;background:linear-gradient(90deg,#97ffe3 0px,#fffcde 168px,#ffcdb3 250px)"></i><i style="top:195.4px;left:1649.2px;width:250.0px;height:3.3px;background:linear-gradient(90deg,#99ffe5 0px,#fffce0 166px,#ffcbb4 250px)"></i><i style="top:198.4px;left:1649.2px;width:250.0px;height:3.3px;background:linear-gradient(90deg,#9affe6 0px,#fffde3 162px,#ffcab4 250px)"></i><i style="top:201.4px;left:1649.2px;width:250.0px;height:3.3px;background:linear-gradient(90deg,#9bffe8 0px,#fffde4 160px,#ffc9b4 250px)"></i><i style="top:204.4px;left:1649.2px;width:250.0px;height:3.3px;background:linear-gradient(90deg,#9cffea 0px,#fffce5 158px,#ffc8b4 250px)"></i><i style="top:207.4px;left:1649.2px;width:250.0px;height:3.3px;background:linear-gradient(90deg,#9dffeb 0px,#fffce7 156px,#ffc6b5 250px)"></i><i style="top:210.4px;left:1649.2px;width:250.0px;height:3.3px;background:linear-gradient(90deg,#9effed 0px,#fffdea 152px,#ffc5b5 250px)"></i><i style="top:213.4px;left:1649.2px;width:250.0px;height:3.3px;background:linear-gradient(90deg,#a0ffee 0px,#fffdeb 150px,#ffc4b5 250px)"></i><i style="top:216.4px;left:1649.2px;width:250.0px;height:3.3px;background:linear-gradient(90deg,#a1fff0 0px,#fffded 148px,#ffc2b5 250px)"></i><i style="top:219.4px;left:1649.2px;width:250.0px;height:3.3px;background:linear-gradient(90deg,#a2fff2 0px,#fffcee 146px,#ffc1b6 250px)"></i><i style="top:222.4px;left:1649.2px;width:250.0px;height:3.3px;background:linear-gradient(90deg,#a3fff3 0px,#fffcf0 144px,#ffc1b7 248px,#ffc0b6 250px)"></i><i style="top:225.4px;left:1649.2px;width:250.0px;height:3.3px;background:linear-gradient(90deg,#a5fff5 0px,#fffdf3 140px,#ffc1b9 244px,#ffbfb6 250px)"></i><i style="top:228.4px;left:1649.2px;width:250.0px;height:3.3px;background:linear-gradient(90deg,#a6fff7 0px,#fffdf4 138px,#ffc2bb 240px,#ffbdb6 250px)"></i><i style="top:231.4px;left:1649.2px;width:250.0px;height:3.3px;background:linear-gradient(90deg,#a7fff9 0px,#fffcf6 136px,#ffc2bc 238px,#ffbcb7 250px)"></i><i style="top:234.4px;left:1649.2px;width:250.0px;height:3.3px;background:linear-gradient(90deg,#a8fffa 0px,#fffcf7 134px,#ffc1bd 236px,#ffbbb7 250px)"></i><i style="top:237.4px;left:1649.2px;width:250.0px;height:3.3px;background:linear-gradient(90deg,#aafffc 0px,#fffdfa 130px,#ffc2bf 232px,#ffb9b7 250px)"></i><i style="top:240.4px;left:1649.2px;width:250.0px;height:3.3px;background:linear-gradient(90deg,#abfffe 0px,#fffdfc 128px,#ffc1c1 230px,#ffb8b7 250px)"></i><i style="top:243.4px;left:1649.2px;width:250.0px;height:3.3px;background:linear-gradient(90deg,#acfeff 0px,#fffcfd 126px,#ffc1c2 228px,#ffb7b8 250px)"></i><i style="top:246.4px;left:1649.2px;width:250.0px;height:3.3px;background:linear-gradient(90deg,#acfdff 0px,#fff9fc 128px,#ffbfc1 230px,#ffb6b8 250px)"></i><i style="top:249.4px;left:1649.2px;width:250.0px;height:3.3px;background:linear-gradient(90deg,#acfbff 0px,#fff8fc 128px,#ffbec1 230px,#ffb5b8 250px)"></i><i style="top:252.4px;left:1649.2px;width:250.0px;height:3.3px;background:linear-gradient(90deg,#acf9ff 0px,#fff6fc 128px,#ffbcc2 230px,#ffb3b8 250px)"></i><i style="top:255.4px;left:1649.2px;width:250.0px;height:3.3px;background:linear-gradient(90deg,#acf7ff 0px,#fff4fc 128px,#ffbac1 232px,#ffb2b9 250px)"></i><i style="top:258.4px;left:1649.2px;width:250.0px;height:3.3px;background:linear-gradient(90deg,#acf6ff 0px,#fff2fc 128px,#ffb9c1 232px,#ffb1b9 250px)"></i><i style="top:261.4px;left:1649.2px;width:250.0px;height:3.3px;background:linear-gradient(90deg,#adf4ff 0px,#fff1fd 128px,#ffb7c1 232px,#ffb0b9 250px)"></i><i style="top:264.4px;left:1649.2px;width:250.0px;height:3.3px;background:linear-gradient(90deg,#adf2ff 0px,#ffeffd 128px,#ffb6c2 232px,#ffaeb9 250px)"></i><i style="top:267.4px;left:1649.2px;width:250.0px;height:3.3px;background:linear-gradient(90deg,#adf1ff 0px,#ffedfd 128px,#ffb5c2 232px,#ffadba 250px)"></i><i style="top:270.4px;left:1649.2px;width:250.0px;height:3.3px;background:linear-gradient(90deg,#adefff 0px,#ffecfd 128px,#ffb4c2 232px,#ffacba 250px)"></i><i style="top:273.4px;left:1649.2px;width:250.0px;height:3.3px;background:linear-gradient(90deg,#adedff 0px,#ffe9fc 130px,#ffb1c0 236px,#ffabba 250px)"></i><i style="top:276.4px;left:1649.2px;width:250.0px;height:3.3px;background:linear-gradient(90deg,#adecff 0px,#ffe7fc 130px,#ffafc1 236px,#ffaaba 250px)"></i><i style="top:279.4px;left:1649.2px;width:250.0px;height:3.3px;background:linear-gradient(90deg,#adeaff 0px,#ffe5fc 130px,#ffaec1 236px,#ffa8bb 250px)"></i><i style="top:282.4px;left:1649.2px;width:250.0px;height:3.3px;background:linear-gradient(90deg,#ade8ff 0px,#ffe4fc 130px,#ffadc1 236px,#ffa7bb 250px)"></i><i style="top:285.4px;left:1649.2px;width:250.0px;height:3.3px;background:linear-gradient(90deg,#ade7ff 0px,#ffe2fc 130px,#ffacc1 236px,#ffa6bb 250px)"></i><i style="top:288.4px;left:1649.2px;width:250.0px;height:3.3px;background:linear-gradient(90deg,#ade5ff 0px,#ffe1fc 130px,#ffabc2 236px,#ffa5bb 250px)"></i><i style="top:291.4px;left:1649.2px;width:250.0px;height:3.3px;background:linear-gradient(90deg,#aee3ff 0px,#ffdffd 130px,#ffa9c2 236px,#ffa4bc 250px)"></i><i style="top:294.4px;left:1649.2px;width:250.0px;height:3.3px;background:linear-gradient(90deg,#aee2ff 0px,#ffddfd 130px,#ffa8c2 236px,#ffa3bc 250px)"></i><i style="top:297.4px;left:1649.2px;width:250.0px;height:3.3px;background:linear-gradient(90deg,#aee0ff 0px,#ffdcfd 130px,#ffa6c1 238px,#ffa1bc 250px)"></i><i style="top:300.4px;left:1649.2px;width:250.0px;height:3.3px;background:linear-gradient(90deg,#aedeff 0px,#ffdafd 130px,#ffa5c2 238px,#ffa0bc 250px)"></i><i style="top:303.4px;left:1649.2px;width:250.0px;height:3.3px;background:linear-gradient(90deg,#aeddff 0px,#ffd7fc 132px,#ffa3c1 240px,#ff9fbc 250px)"></i><i style="top:306.4px;left:1649.2px;width:250.0px;height:3.3px;background:linear-gradient(90deg,#aedbff 0px,#ffd6fc 132px,#ffa2c1 240px,#ff9ebd 250px)"></i><i style="top:309.4px;left:1649.2px;width:250.0px;height:3.3px;background:linear-gradient(90deg,#aedaff 0px,#ffd4fc 132px,#ffa1c1 240px,#ff9dbd 250px)"></i><i style="top:312.4px;left:1649.2px;width:250.0px;height:3.3px;background:linear-gradient(90deg,#aed8ff 0px,#ffd3fc 132px,#ffa0c2 240px,#ff9cbd 250px)"></i><i style="top:315.4px;left:1649.2px;width:250.0px;height:3.3px;background:linear-gradient(90deg,#aed7ff 0px,#ffd1fc 132px,#ff9ec1 242px,#ff9bbd 250px)"></i><i style="top:318.4px;left:1649.2px;width:250.0px;height:3.3px;background:linear-gradient(90deg,#aed5ff 0px,#ffd0fd 132px,#ff9cc1 242px,#ff99be 250px)"></i><i style="top:321.4px;left:1649.2px;width:250.0px;height:3.3px;background:linear-gradient(90deg,#afd3ff 0px,#ffcefd 132px,#ff9bc1 242px,#ff98be 250px)"></i><i style="top:324.4px;left:1649.2px;width:250.0px;height:3.3px;background:linear-gradient(90deg,#afd2ff 0px,#ffcdfd 132px,#ff9ac2 242px,#ff97be 250px)"></i><i style="top:327.4px;left:1649.2px;width:250.0px;height:3.3px;background:linear-gradient(90deg,#afd0ff 0px,#ffcbfd 132px,#ff99c2 242px,#ff96be 250px)"></i><i style="top:330.4px;left:1649.2px;width:250.0px;height:3.3px;background:linear-gradient(90deg,#afcfff 0px,#ffcafd 132px,#ff98c2 242px,#ff95be 250px)"></i><i style="top:333.4px;left:1649.2px;width:250.0px;height:3.3px;background:linear-gradient(90deg,#afcdff 0px,#ffc7fc 134px,#ff95c0 246px,#ff94bf 250px)"></i><i style="top:336.4px;left:1649.2px;width:250.0px;height:3.3px;background:linear-gradient(90deg,#afccff 0px,#ffc6fc 134px,#ff94c1 246px,#ff93bf 250px)"></i><i style="top:339.4px;left:1649.2px;width:250.0px;height:3.3px;background:linear-gradient(90deg,#afcaff 0px,#ffc4fc 134px,#ff93c1 246px,#ff92bf 250px)"></i><i style="top:342.4px;left:1649.2px;width:250.0px;height:1.9px;background:linear-gradient(90deg,#afc9ff 0px,#ffc3fc 134px,#ff92c1 246px,#ff91bf 250px)"></i></div>
<svg width="1920" height="1048" viewBox="0 0 1920 1048">
<circle cx="10.5" cy="11.5" r="8" fill="url(#rb)"/><circle cx="10.5" cy="11.5" r="6.3" fill="#000"/>
<text x="10.5" y="14.2" font-size="7" text-anchor="middle" textLength="9.5" lengthAdjust="spacingAndGlyphs" font-weight="700" fill="#fff">CM</text>
<text x="23.3" y="15.8" font-size="12.2" textLength="291.0" lengthAdjust="spacingAndGlyphs" fill="#000">CalMAN 2016 CalMAN Enthusiast for Home Video</text>
<line x1="1799.0" y1="10.5" x2="1809.0" y2="10.5" stroke="#000" stroke-width="1"/>
<path d="M1844.5 7.5h7.5v7h-7.5z M1846.5 7.5v-2h7.5v7h-2" fill="none" stroke="#000" stroke-width="1"/>
<path d="M1890 5l10 10M1900 5l-10 10" stroke="#000" stroke-width="1.1" fill="none"/>
<text x="13.5" y="47.3" font-size="28.3" textLength="128.5" lengthAdjust="spacingAndGlyphs" fill="#fff" stroke="#fff" stroke-width="1">CalMAN</text>
<circle cx="166" cy="38" r="10" fill="url(#cmd)"/><path d="M161.5 35.5h9l-4.5 5.5z" fill="#fff"/>
<circle cx="12.5" cy="72" r="10" fill="url(#pbc)"/><path d="M9.5 66.5v10.5l6-5.2z" fill="#fff"/>
<text x="35.5" y="78.2" font-size="11.5" textLength="46.0" lengthAdjust="spacingAndGlyphs" fill="#e4e4e4">History 1</text>
<circle cx="103" cy="74.5" r="9.5" fill="url(#plc)"/>
<text x="103.0" y="79.3" font-size="11" text-anchor="middle" fill="#8a8a8a">+</text>
<circle cx="1516.5" cy="74" r="10" fill="url(#ddc)"/><path d="M1511.5 72.5h10l-5 5.5z" fill="#fff"/>
<text x="1398.0" y="69.8" font-size="10.8" textLength="105.0" lengthAdjust="spacingAndGlyphs" fill="#f2f2f2">X-Rite i1Display Retail</text>
<text x="1398.0" y="84.1" font-size="10.8" textLength="47.0" lengthAdjust="spacingAndGlyphs" fill="#f2f2f2">LCD (LED)</text>
<circle cx="1652.5" cy="74" r="10" fill="url(#ddc)"/><path d="M1647.5 72.5h10l-5 5.5z" fill="#fff"/>
<text x="1547.5" y="69.8" font-size="10.8" textLength="64.0" lengthAdjust="spacingAndGlyphs" fill="#f2f2f2">Mobile Forge</text>
<circle cx="1801" cy="74" r="10" fill="url(#ddc)"/><path d="M1796 72.5h10l-5 5.5z" fill="#fff"/>
<text x="1684.0" y="69.8" font-size="10.8" textLength="105.0" lengthAdjust="spacingAndGlyphs" fill="#f2f2f2">Direct Display Control</text>
<circle cx="1838.0" cy="72.5" r="10.5" fill="url(#pbc)"/>
<line x1="1842.50" y1="72.50" x2="1845.20" y2="72.50" stroke="#d8d8d8" stroke-width="2.6"/><line x1="1841.18" y1="75.68" x2="1843.09" y2="77.59" stroke="#d8d8d8" stroke-width="2.6"/><line x1="1838.00" y1="77.00" x2="1838.00" y2="79.70" stroke="#d8d8d8" stroke-width="2.6"/><line x1="1834.82" y1="75.68" x2="1832.91" y2="77.59" stroke="#d8d8d8" stroke-width="2.6"/><line x1="1833.50" y1="72.50" x2="1830.80" y2="72.50" stroke="#d8d8d8" stroke-width="2.6"/><line x1="1834.82" y1="69.32" x2="1832.91" y2="67.41" stroke="#d8d8d8" stroke-width="2.6"/><line x1="1838.00" y1="68.00" x2="1838.00" y2="65.30" stroke="#d8d8d8" stroke-width="2.6"/><line x1="1841.18" y1="69.32" x2="1843.09" y2="67.41" stroke="#d8d8d8" stroke-width="2.6"/><circle cx="1838.0" cy="72.5" r="4" fill="none" stroke="#d8d8d8" stroke-width="2.2"/>
<circle cx="1873.75" cy="72.5" r="10.5" fill="url(#pbc)"/>
<text x="1873.8" y="77.5" font-size="14.5" text-anchor="middle" font-weight="700" fill="#fff">?</text>
<circle cx="1909.25" cy="72.5" r="10.5" fill="url(#pbc)"/>
<path d="M1909 66.5v11l-6-5.5z" fill="#fff"/>
<text x="28.8" y="151.6" font-size="42" textLength="220.5" lengthAdjust="spacingAndGlyphs" fill="#f4f4f4">Colorspace</text>
<text x="23.0" y="685.3" font-size="14.5" text-anchor="middle" textLength="8.1" lengthAdjust="spacingAndGlyphs" fill="#e2e2e2">0</text>
<text x="74.4" y="685.3" font-size="14.5" text-anchor="middle" textLength="8.1" lengthAdjust="spacingAndGlyphs" fill="#e2e2e2">2</text>
<text x="125.8" y="685.3" font-size="14.5" text-anchor="middle" textLength="8.1" lengthAdjust="spacingAndGlyphs" fill="#e2e2e2">4</text>
<text x="177.3" y="685.3" font-size="14.5" text-anchor="middle" textLength="8.1" lengthAdjust="spacingAndGlyphs" fill="#e2e2e2">6</text>
<text x="228.7" y="685.3" font-size="14.5" text-anchor="middle" textLength="8.1" lengthAdjust="spacingAndGlyphs" fill="#e2e2e2">8</text>
<text x="280.1" y="685.3" font-size="14.5" text-anchor="middle" textLength="16.8" lengthAdjust="spacingAndGlyphs" fill="#e2e2e2">10</text>
<text x="331.5" y="685.3" font-size="14.5" text-anchor="middle" textLength="16.8" lengthAdjust="spacingAndGlyphs" fill="#e2e2e2">12</text>
<text x="382.9" y="685.3" font-size="14.5" text-anchor="middle" textLength="16.8" lengthAdjust="spacingAndGlyphs" fill="#e2e2e2">14</text>
<text x="216.7" y="206.9" font-size="14.5" text-anchor="middle" textLength="91.0" lengthAdjust="spacingAndGlyphs" fill="#e2e2e2">DeltaE 2000</text>
<text x="462.9" y="490.9" font-size="14.5" text-anchor="end" textLength="23.1" lengthAdjust="spacingAndGlyphs" fill="#e2e2e2">-15</text>
<text x="462.9" y="433.0" font-size="14.5" text-anchor="end" textLength="23.1" lengthAdjust="spacingAndGlyphs" fill="#e2e2e2">-10</text>
<text x="462.9" y="375.0" font-size="14.5" text-anchor="end" textLength="14.4" lengthAdjust="spacingAndGlyphs" fill="#e2e2e2">-5</text>
<text x="462.9" y="317.0" font-size="14.5" text-anchor="end" textLength="8.1" lengthAdjust="spacingAndGlyphs" fill="#e2e2e2">0</text>
<text x="462.9" y="259.5" font-size="14.5" text-anchor="end" textLength="8.1" lengthAdjust="spacingAndGlyphs" fill="#e2e2e2">5</text>
<text x="462.9" y="203.0" font-size="14.5" text-anchor="end" textLength="16.8" lengthAdjust="spacingAndGlyphs" fill="#e2e2e2">10</text>
<text x="462.9" y="144.2" font-size="14.5" text-anchor="end" textLength="16.8" lengthAdjust="spacingAndGlyphs" fill="#e2e2e2">15</text>
<text x="537.7" y="133.0" font-size="14.5" text-anchor="middle" textLength="48.0" lengthAdjust="spacingAndGlyphs" fill="#e2e2e2">DeltaL</text>
<text x="553.5" y="500.8" font-size="14.5" text-anchor="middle" textLength="44.0" lengthAdjust="spacingAndGlyphs" fill="#e2e2e2">100W</text>
<text x="690.0" y="490.9" font-size="14.5" text-anchor="end" textLength="23.1" lengthAdjust="spacingAndGlyphs" fill="#e2e2e2">-15</text>
<text x="690.0" y="433.0" font-size="14.5" text-anchor="end" textLength="23.1" lengthAdjust="spacingAndGlyphs" fill="#e2e2e2">-10</text>
<text x="690.0" y="375.0" font-size="14.5" text-anchor="end" textLength="14.4" lengthAdjust="spacingAndGlyphs" fill="#e2e2e2">-5</text>
<text x="690.0" y="317.0" font-size="14.5" text-anchor="end" textLength="8.1" lengthAdjust="spacingAndGlyphs" fill="#e2e2e2">0</text>
<text x="690.0" y="259.5" font-size="14.5" text-anchor="end" textLength="8.1" lengthAdjust="spacingAndGlyphs" fill="#e2e2e2">5</text>
<text x="690.0" y="203.0" font-size="14.5" text-anchor="end" textLength="16.8" lengthAdjust="spacingAndGlyphs" fill="#e2e2e2">10</text>
<text x="690.0" y="144.2" font-size="14.5" text-anchor="end" textLength="16.8" lengthAdjust="spacingAndGlyphs" fill="#e2e2e2">15</text>
<text x="764.8" y="133.0" font-size="14.5" text-anchor="middle" textLength="50.4" lengthAdjust="spacingAndGlyphs" fill="#e2e2e2">DeltaC</text>
<text x="780.4" y="500.8" font-size="14.5" text-anchor="middle" textLength="44.0" lengthAdjust="spacingAndGlyphs" fill="#e2e2e2">100W</text>
<text x="917.0" y="490.9" font-size="14.5" text-anchor="end" textLength="23.1" lengthAdjust="spacingAndGlyphs" fill="#e2e2e2">-15</text>
<text x="917.0" y="433.0" font-size="14.5" text-anchor="end" textLength="23.1" lengthAdjust="spacingAndGlyphs" fill="#e2e2e2">-10</text>
<text x="917.0" y="375.0" font-size="14.5" text-anchor="end" textLength="14.4" lengthAdjust="spacingAndGlyphs" fill="#e2e2e2">-5</text>
<text x="917.0" y="317.0" font-size="14.5" text-anchor="end" textLength="8.1" lengthAdjust="spacingAndGlyphs" fill="#e2e2e2">0</text>
<text x="917.0" y="259.5" font-size="14.5" text-anchor="end" textLength="8.1" lengthAdjust="spacingAndGlyphs" fill="#e2e2e2">5</text>
<text x="917.0" y="203.0" font-size="14.5" text-anchor="end" textLength="16.8" lengthAdjust="spacingAndGlyphs" fill="#e2e2e2">10</text>
<text x="917.0" y="144.2" font-size="14.5" text-anchor="end" textLength="16.8" lengthAdjust="spacingAndGlyphs" fill="#e2e2e2">15</text>
<text x="991.3" y="133.0" font-size="14.5" text-anchor="middle" textLength="51.0" lengthAdjust="spacingAndGlyphs" fill="#e2e2e2">DeltaH</text>
<text x="1007.5" y="500.8" font-size="14.5" text-anchor="middle" textLength="44.0" lengthAdjust="spacingAndGlyphs" fill="#e2e2e2">100W</text>
<text x="487.8" y="686.8" font-size="14.5" text-anchor="middle" textLength="39.0" lengthAdjust="spacingAndGlyphs" fill="#fff" stroke="#fff" stroke-width=".3">White</text>
<text x="571.0" y="686.8" font-size="14.5" text-anchor="middle" textLength="24.0" lengthAdjust="spacingAndGlyphs" fill="#fff" stroke="#fff" stroke-width=".3">Red</text>
<text x="654.2" y="686.8" font-size="14.5" text-anchor="middle" textLength="39.5" lengthAdjust="spacingAndGlyphs" fill="#fff" stroke="#fff" stroke-width=".3">Green</text>
<text x="737.4" y="686.8" font-size="14.5" text-anchor="middle" textLength="28.5" lengthAdjust="spacingAndGlyphs" fill="#fff" stroke="#fff" stroke-width=".3">Blue</text>
<text x="820.6" y="686.8" font-size="14.5" text-anchor="middle" textLength="31.5" lengthAdjust="spacingAndGlyphs" fill="#fff" stroke="#fff" stroke-width=".3">Cyan</text>
<text x="903.8" y="686.8" font-size="14.5" text-anchor="middle" textLength="57.0" lengthAdjust="spacingAndGlyphs" fill="#fff" stroke="#fff" stroke-width=".3">Magenta</text>
<text x="987.0" y="686.8" font-size="14.5" text-anchor="middle" textLength="41.5" lengthAdjust="spacingAndGlyphs" fill="#fff" stroke="#fff" stroke-width=".3">Yellow</text>
<text x="1070.2" y="686.8" font-size="14.5" text-anchor="middle" textLength="37.5" lengthAdjust="spacingAndGlyphs" fill="#fff" stroke="#fff" stroke-width=".3">100W</text>
<text transform="translate(446,558.5) rotate(-90)" font-size="12.5" font-weight="700" fill="#fff" text-anchor="middle" textLength="38.5" lengthAdjust="spacingAndGlyphs">Actual</text>
<text transform="translate(446,639.5) rotate(-90)" font-size="12.5" font-weight="700" fill="#fff" text-anchor="middle" textLength="37" lengthAdjust="spacingAndGlyphs">Target</text>
<text x="1162.0" y="695.6" font-size="14.5" text-anchor="middle" textLength="8.0" lengthAdjust="spacingAndGlyphs" fill="#e2e2e2">0</text>
<text x="1154.5" y="679.4" font-size="14.5" text-anchor="end" textLength="8.0" lengthAdjust="spacingAndGlyphs" fill="#e2e2e2">0</text>
<text x="1250.6" y="695.6" font-size="14.5" text-anchor="middle" textLength="23.0" lengthAdjust="spacingAndGlyphs" fill="#e2e2e2">0.1</text>
<text x="1154.5" y="615.8" font-size="14.5" text-anchor="end" textLength="22.5" lengthAdjust="spacingAndGlyphs" fill="#e2e2e2">0.1</text>
<text x="1339.3" y="695.6" font-size="14.5" text-anchor="middle" textLength="23.0" lengthAdjust="spacingAndGlyphs" fill="#e2e2e2">0.2</text>
<text x="1154.5" y="552.2" font-size="14.5" text-anchor="end" textLength="22.5" lengthAdjust="spacingAndGlyphs" fill="#e2e2e2">0.2</text>
<text x="1427.9" y="695.6" font-size="14.5" text-anchor="middle" textLength="23.0" lengthAdjust="spacingAndGlyphs" fill="#e2e2e2">0.3</text>
<text x="1154.5" y="488.6" font-size="14.5" text-anchor="end" textLength="22.5" lengthAdjust="spacingAndGlyphs" fill="#e2e2e2">0.3</text>
<text x="1516.6" y="695.6" font-size="14.5" text-anchor="middle" textLength="23.0" lengthAdjust="spacingAndGlyphs" fill="#e2e2e2">0.4</text>
<text x="1154.5" y="425.0" font-size="14.5" text-anchor="end" textLength="22.5" lengthAdjust="spacingAndGlyphs" fill="#e2e2e2">0.4</text>
<text x="1605.2" y="695.6" font-size="14.5" text-anchor="middle" textLength="23.0" lengthAdjust="spacingAndGlyphs" fill="#e2e2e2">0.5</text>
<text x="1154.5" y="361.4" font-size="14.5" text-anchor="end" textLength="22.5" lengthAdjust="spacingAndGlyphs" fill="#e2e2e2">0.5</text>
<text x="1693.8" y="695.6" font-size="14.5" text-anchor="middle" textLength="23.0" lengthAdjust="spacingAndGlyphs" fill="#e2e2e2">0.6</text>
<text x="1154.5" y="297.8" font-size="14.5" text-anchor="end" textLength="22.5" lengthAdjust="spacingAndGlyphs" fill="#e2e2e2">0.6</text>
<text x="1782.5" y="695.6" font-size="14.5" text-anchor="middle" textLength="23.0" lengthAdjust="spacingAndGlyphs" fill="#e2e2e2">0.7</text>
<text x="1154.5" y="234.2" font-size="14.5" text-anchor="end" textLength="22.5" lengthAdjust="spacingAndGlyphs" fill="#e2e2e2">0.7</text>
<text x="1871.1" y="695.6" font-size="14.5" text-anchor="middle" textLength="23.0" lengthAdjust="spacingAndGlyphs" fill="#e2e2e2">0.8</text>
<text x="1154.5" y="170.6" font-size="14.5" text-anchor="end" textLength="22.5" lengthAdjust="spacingAndGlyphs" fill="#e2e2e2">0.8</text>
<text x="1520.0" y="130.9" font-size="14.5" text-anchor="middle" textLength="87.0" lengthAdjust="spacingAndGlyphs" fill="#e2e2e2">CIE 1931 xy</text>
<path d="M1316.4 669.0L1316.3 669.1L1316.3 669.1L1316.1 669.1L1316.0 669.2L1315.9 669.2L1315.7 669.2L1315.5 669.2L1315.2 669.2L1314.9 669.2L1314.6 669.1L1314.3 669.1L1314.0 669.0L1313.7 668.9L1313.4 668.7L1313.0 668.6L1312.7 668.4L1312.3 668.1L1311.8 667.8L1311.2 667.5L1310.7 667.2L1310.1 666.8L1309.4 666.3L1308.6 665.8L1307.8 665.3L1306.8 664.7L1305.8 664.1L1304.8 663.4L1303.6 662.7L1302.3 661.9L1300.8 660.9L1299.3 660.0L1297.7 659.0L1295.9 658.0L1294.0 656.7L1291.9 655.2L1289.6 653.3L1287.0 650.9L1284.0 648.1L1280.9 645.0L1277.7 641.7L1274.7 638.5L1271.9 635.3L1269.5 632.4L1267.4 629.6L1265.4 626.8L1263.4 623.8L1261.3 620.5L1259.0 616.8L1256.6 612.7L1254.0 608.4L1251.3 603.7L1248.6 598.7L1245.7 593.3L1242.7 587.5L1239.6 581.3L1236.4 574.7L1233.0 567.7L1229.5 560.3L1226.1 552.5L1222.6 544.1L1219.2 535.2L1215.7 525.8L1212.2 516.0L1208.8 505.7L1205.3 495.0L1201.9 483.9L1198.5 472.3L1195.1 460.1L1191.7 447.5L1188.4 434.7L1185.3 421.7L1182.4 408.7L1179.7 395.6L1177.1 382.1L1174.7 368.5L1172.4 355.0L1170.5 341.5L1168.8 328.4L1167.5 315.6L1166.4 302.7L1165.5 290.1L1165.0 277.7L1164.8 265.7L1165.0 254.1L1165.6 242.9L1166.5 232.0L1167.8 221.5L1169.5 211.4L1171.5 202.0L1173.9 193.2L1176.7 185.1L1180.0 177.5L1183.6 170.5L1187.5 164.2L1191.7 158.6L1196.1 153.7L1200.8 149.7L1205.8 146.5L1211.1 144.0L1216.5 142.1L1222.0 140.8L1227.6 139.8L1233.3 139.5L1239.1 139.7L1245.1 140.6L1251.1 141.8L1257.1 143.2L1263.1 144.7L1269.1 146.3L1275.2 148.3L1281.2 150.5L1287.3 152.8L1293.3 155.2L1299.1 157.6L1304.9 160.1L1310.7 162.5L1316.3 165.1L1322.0 167.7L1327.6 170.4L1333.1 173.2L1338.6 175.9L1344.1 178.8L1349.6 181.6L1355.0 184.6L1360.4 187.6L1365.8 190.6L1371.2 193.7L1376.5 196.8L1381.9 200.0L1387.3 203.2L1392.6 206.5L1398.0 209.7L1403.3 213.1L1408.6 216.4L1413.9 219.8L1419.2 223.3L1424.5 226.7L1429.8 230.2L1435.1 233.7L1440.4 237.2L1445.7 240.7L1451.0 244.3L1456.3 247.9L1461.6 251.5L1466.9 255.1L1472.2 258.8L1477.5 262.4L1482.8 266.1L1488.1 269.8L1493.4 273.5L1498.7 277.2L1504.0 280.9L1509.3 284.6L1514.6 288.3L1519.8 292.0L1525.1 295.8L1530.4 299.5L1535.6 303.2L1540.9 306.9L1546.1 310.6L1551.4 314.3L1556.6 318.0L1561.8 321.7L1566.9 325.4L1572.1 329.1L1577.2 332.8L1582.4 336.4L1587.4 340.1L1592.5 343.7L1597.5 347.3L1602.6 350.9L1607.6 354.5L1612.5 358.0L1617.4 361.5L1622.3 365.0L1627.2 368.5L1632.0 371.9L1636.7 375.4L1641.5 378.7L1646.2 382.1L1650.8 385.4L1655.4 388.7L1659.9 391.9L1664.4 395.1L1668.8 398.3L1673.2 401.4L1677.5 404.4L1681.7 407.5L1685.9 410.5L1689.9 413.4L1693.9 416.3L1697.8 419.1L1701.6 421.8L1705.3 424.4L1708.9 427.0L1712.4 429.5L1715.9 432.0L1719.3 434.4L1722.6 436.8L1725.9 439.1L1729.1 441.4L1732.2 443.6L1735.2 445.8L1738.1 447.9L1740.8 449.8L1743.3 451.5L1745.7 453.2L1748.2 455.0L1750.8 456.8L1753.8 459.0L1757.3 461.5L1761.2 464.3L1765.3 467.2L1769.4 470.2L1773.2 472.9L1776.7 475.4L1779.6 477.5L1782.3 479.4L1784.8 481.2L1787.0 482.8L1789.2 484.3L1791.2 485.8L1793.2 487.2L1795.0 488.5L1796.7 489.7L1798.3 490.8L1799.7 491.9L1801.1 492.9L1802.4 493.8L1803.6 494.6L1804.6 495.4L1805.6 496.0L1806.5 496.7L1807.3 497.3L1808.1 497.8L1808.7 498.3L1809.2 498.6L1809.8 499.0L1810.3 499.4L1810.9 499.8L1811.6 500.3L1812.4 500.9L1813.2 501.5L1814.0 502.0L1814.6 502.5L1815.1 502.8ZM1729.7 461.5L1428.5 289.8L1295.6 633.2Z" fill="#000" fill-opacity=".4" fill-rule="evenodd"/>
<rect x="1647.3" y="142.6" width="253.6" height="203.2" fill="none" stroke="#2f2f2f" stroke-width="3.4"/>
<rect x="1649.2" y="144.4" width="250.0" height="199.6" fill="none" stroke="#6a6a6a" stroke-opacity=".8" stroke-width="1.1"/>
<rect x="1720.3" y="454.4" width="16.2" height="14.2" fill="none" stroke="#fff" stroke-width="1.8"/>
<rect x="1419.1" y="282.7" width="16.2" height="14.2" fill="none" stroke="#fff" stroke-width="1.8"/>
<rect x="1286.2" y="626.1" width="16.2" height="14.2" fill="none" stroke="#fff" stroke-width="1.8"/>
<rect x="1352.3" y="455.2" width="16.2" height="14.2" fill="none" stroke="#fff" stroke-width="1.8"/>
<rect x="1437.6" y="566.2" width="16.2" height="14.2" fill="none" stroke="#fff" stroke-width="1.8"/>
<rect x="1524.8" y="342.9" width="16.2" height="14.2" fill="none" stroke="#fff" stroke-width="1.8"/>
<rect x="1432.3" y="455.2" width="15" height="14" fill="rgba(255,255,255,.5)" stroke="#000" stroke-width="2"/>
<circle cx="1738.8" cy="460.6" r="4.6" fill="#c00000" fill-opacity="0.6" stroke="#000" stroke-width="1.5"/>
<circle cx="1437.4" cy="290.6" r="4.6" fill="#00b000" fill-opacity="0.5" stroke="#000" stroke-width="1.5"/>
<circle cx="1304.5" cy="632.5" r="4.6" fill="#0000c0" fill-opacity="0.5" stroke="#000" stroke-width="1.5"/>
<circle cx="1364.8" cy="455.2" r="4.6" fill="#00a0a0" fill-opacity="0.6" stroke="#000" stroke-width="1.5"/>
<circle cx="1448.6" cy="578.2" r="4.6" fill="#b000b0" fill-opacity="0.6" stroke="#000" stroke-width="1.5"/>
<circle cx="1544.0" cy="332.2" r="4.6" fill="#a0a000" fill-opacity="0.6" stroke="#000" stroke-width="1.5"/>
<circle cx="1442.1" cy="458.4" r="4.6" fill="#c8c8c8" fill-opacity="0.9" stroke="#000" stroke-width="1.5"/>
<circle cx="1442.9" cy="459.7" r="4.6" fill="#ffffff" fill-opacity="0.9" stroke="#000" stroke-width="1.5"/>
<rect x="1765.2" y="237.20000000000002" width="15" height="13.4" fill="#fff" fill-opacity=".85" stroke="#000" stroke-width="1.8"/>
<circle cx="1786.3" cy="220" r="5" fill="#b4b4b4" stroke="#000" stroke-width="1.2"/>
<circle cx="1791.5" cy="229" r="5" fill="#fff" stroke="#000" stroke-width="1.2"/>
<rect x="1613.0" y="637.5" width="291.8" height="29.2" fill="#333"/>
<text x="1614.5" y="659.5" font-size="21.5" textLength="255.0" lengthAdjust="spacingAndGlyphs" fill="#f0f0f0">Gamut Coverage:  97.9%</text>
<text x="17.0" y="775.5" font-size="32.5" textLength="252.0" lengthAdjust="spacingAndGlyphs" fill="#f4f4f4">Current Reading</text>
<text x="17.0" y="821.0" font-size="26.5" textLength="117.0" lengthAdjust="spacingAndGlyphs" fill="#f4f4f4">x: 0.3163</text>
<text x="17.0" y="865.5" font-size="26.5" textLength="118.5" lengthAdjust="spacingAndGlyphs" fill="#f4f4f4">y: 0.3329</text>
<text x="17.0" y="910.0" font-size="26.5" textLength="110.5" lengthAdjust="spacingAndGlyphs" fill="#f4f4f4">fL: 28.62</text>
<text x="17.0" y="954.3" font-size="26.5" textLength="166.5" lengthAdjust="spacingAndGlyphs" fill="#f4f4f4">cd/m²: 98.07</text>
<text x="390.4" y="940.2" font-size="14.5" text-anchor="end" textLength="14.4" lengthAdjust="spacingAndGlyphs" fill="#e2e2e2">-5</text>
<text x="390.4" y="858.6" font-size="14.5" text-anchor="end" textLength="8.1" lengthAdjust="spacingAndGlyphs" fill="#e2e2e2">0</text>
<text x="390.4" y="777.0" font-size="14.5" text-anchor="end" textLength="8.1" lengthAdjust="spacingAndGlyphs" fill="#e2e2e2">5</text>
<text x="537.0" y="747.0" font-size="14.5" text-anchor="middle" textLength="96.0" lengthAdjust="spacingAndGlyphs" fill="#e2e2e2">RGB Balance</text>
<text x="547.5" y="966.7" font-size="14.5" text-anchor="middle" textLength="44.0" lengthAdjust="spacingAndGlyphs" fill="#e2e2e2">100W</text>
<text x="836.2" y="756.8" font-size="21" textLength="48.0" lengthAdjust="spacingAndGlyphs" fill="#f6f6f6" stroke="#f0f0f0" stroke-width=".35">White</text>
<text x="921.8" y="756.8" font-size="21" textLength="30.0" lengthAdjust="spacingAndGlyphs" fill="#f6f6f6" stroke="#f0f0f0" stroke-width=".35">Red</text>
<text x="1008.3" y="756.8" font-size="21" textLength="49.0" lengthAdjust="spacingAndGlyphs" fill="#f6f6f6" stroke="#f0f0f0" stroke-width=".35">Green</text>
<text x="1094.8" y="756.8" font-size="21" textLength="35.5" lengthAdjust="spacingAndGlyphs" fill="#f6f6f6" stroke="#f0f0f0" stroke-width=".35">Blue</text>
<text x="1169.6" y="756.8" font-size="21" textLength="39.0" lengthAdjust="spacingAndGlyphs" fill="#f6f6f6" stroke="#f0f0f0" stroke-width=".35">Cyan</text>
<text x="1256.0" y="756.8" font-size="21" textLength="71.0" lengthAdjust="spacingAndGlyphs" fill="#f6f6f6" stroke="#f0f0f0" stroke-width=".35">Magenta</text>
<text x="1342.5" y="756.8" font-size="21" textLength="52.0" lengthAdjust="spacingAndGlyphs" fill="#f6f6f6" stroke="#f0f0f0" stroke-width=".35">Yellow</text>
<text x="1429.0" y="756.8" font-size="21" textLength="47.5" lengthAdjust="spacingAndGlyphs" fill="#f6f6f6" stroke="#f0f0f0" stroke-width=".35">100W</text>
<text x="744.4" y="798.2" font-size="25.5" textLength="72.0" lengthAdjust="spacingAndGlyphs" fill="#f0f0f0" stroke="#f0f0f0" stroke-width=".35">x: CIE31</text>
<text x="836.2" y="798.2" font-size="25.5" textLength="63.5" lengthAdjust="spacingAndGlyphs" fill="#f0f0f0" stroke="#f0f0f0" stroke-width=".35">0.3154</text>
<text x="921.8" y="798.2" font-size="25.5" textLength="63.5" lengthAdjust="spacingAndGlyphs" fill="#f0f0f0" stroke="#f0f0f0" stroke-width=".35">0.6502</text>
<text x="1008.3" y="798.2" font-size="25.5" textLength="63.5" lengthAdjust="spacingAndGlyphs" fill="#f0f0f0" stroke="#f0f0f0" stroke-width=".35">0.3101</text>
<text x="1094.8" y="798.2" font-size="25.5" textLength="63.5" lengthAdjust="spacingAndGlyphs" fill="#f0f0f0" stroke="#f0f0f0" stroke-width=".35">0.1600</text>
<text x="1169.6" y="798.2" font-size="25.5" textLength="63.5" lengthAdjust="spacingAndGlyphs" fill="#f0f0f0" stroke="#f0f0f0" stroke-width=".35">0.2281</text>
<text x="1256.0" y="798.2" font-size="25.5" textLength="63.5" lengthAdjust="spacingAndGlyphs" fill="#f0f0f0" stroke="#f0f0f0" stroke-width=".35">0.3227</text>
<text x="1342.5" y="798.2" font-size="25.5" textLength="63.5" lengthAdjust="spacingAndGlyphs" fill="#f0f0f0" stroke="#f0f0f0" stroke-width=".35">0.4304</text>
<text x="1429.0" y="798.2" font-size="25.5" textLength="63.5" lengthAdjust="spacingAndGlyphs" fill="#f0f0f0" stroke="#f0f0f0" stroke-width=".35">0.3163</text>
<text x="744.4" y="836.0" font-size="25.5" textLength="72.0" lengthAdjust="spacingAndGlyphs" fill="#f0f0f0" stroke="#f0f0f0" stroke-width=".35">y: CIE31</text>
<text x="836.2" y="836.0" font-size="25.5" textLength="63.5" lengthAdjust="spacingAndGlyphs" fill="#f0f0f0" stroke="#f0f0f0" stroke-width=".35">0.3349</text>
<text x="921.8" y="836.0" font-size="25.5" textLength="63.5" lengthAdjust="spacingAndGlyphs" fill="#f0f0f0" stroke="#f0f0f0" stroke-width=".35">0.3315</text>
<text x="1008.3" y="836.0" font-size="25.5" textLength="63.5" lengthAdjust="spacingAndGlyphs" fill="#f0f0f0" stroke="#f0f0f0" stroke-width=".35">0.5987</text>
<text x="1094.8" y="836.0" font-size="25.5" textLength="63.5" lengthAdjust="spacingAndGlyphs" fill="#f0f0f0" stroke="#f0f0f0" stroke-width=".35">0.0611</text>
<text x="1169.6" y="836.0" font-size="25.5" textLength="63.5" lengthAdjust="spacingAndGlyphs" fill="#f0f0f0" stroke="#f0f0f0" stroke-width=".35">0.3399</text>
<text x="1256.0" y="836.0" font-size="25.5" textLength="63.5" lengthAdjust="spacingAndGlyphs" fill="#f0f0f0" stroke="#f0f0f0" stroke-width=".35">0.1466</text>
<text x="1342.5" y="836.0" font-size="25.5" textLength="63.5" lengthAdjust="spacingAndGlyphs" fill="#f0f0f0" stroke="#f0f0f0" stroke-width=".35">0.5333</text>
<text x="1429.0" y="836.0" font-size="25.5" textLength="63.5" lengthAdjust="spacingAndGlyphs" fill="#f0f0f0" stroke="#f0f0f0" stroke-width=".35">0.3329</text>
<text x="744.4" y="873.8" font-size="25.5" textLength="11.0" lengthAdjust="spacingAndGlyphs" fill="#f0f0f0" stroke="#f0f0f0" stroke-width=".35">Y</text>
<text x="836.2" y="873.8" font-size="24.8" textLength="74.5" lengthAdjust="spacingAndGlyphs" fill="#f0f0f0" stroke="#f0f0f0" stroke-width=".35">52.0506</text>
<text x="921.8" y="873.8" font-size="24.8" textLength="74.5" lengthAdjust="spacingAndGlyphs" fill="#f0f0f0" stroke="#f0f0f0" stroke-width=".35">10.4857</text>
<text x="1008.3" y="873.8" font-size="24.8" textLength="74.5" lengthAdjust="spacingAndGlyphs" fill="#f0f0f0" stroke="#f0f0f0" stroke-width=".35">30.9715</text>
<text x="1094.8" y="873.8" font-size="25.5" textLength="63.5" lengthAdjust="spacingAndGlyphs" fill="#f0f0f0" stroke="#f0f0f0" stroke-width=".35">2.8354</text>
<text x="1169.6" y="873.8" font-size="24.8" textLength="74.5" lengthAdjust="spacingAndGlyphs" fill="#f0f0f0" stroke="#f0f0f0" stroke-width=".35">39.7483</text>
<text x="1256.0" y="873.8" font-size="24.8" textLength="74.5" lengthAdjust="spacingAndGlyphs" fill="#f0f0f0" stroke="#f0f0f0" stroke-width=".35">13.2245</text>
<text x="1342.5" y="873.8" font-size="24.8" textLength="74.5" lengthAdjust="spacingAndGlyphs" fill="#f0f0f0" stroke="#f0f0f0" stroke-width=".35">47.3793</text>
<text x="1429.0" y="873.8" font-size="24.8" textLength="74.5" lengthAdjust="spacingAndGlyphs" fill="#f0f0f0" stroke="#f0f0f0" stroke-width=".35">98.0699</text>
<text x="744.4" y="911.6" font-size="25.5" textLength="78.7" lengthAdjust="spacingAndGlyphs" fill="#f0f0f0" stroke="#f0f0f0" stroke-width=".35">Target Y</text>
<text x="836.2" y="911.6" font-size="24.8" textLength="74.5" lengthAdjust="spacingAndGlyphs" fill="#f0f0f0" stroke="#f0f0f0" stroke-width=".35">52.0506</text>
<text x="921.8" y="911.6" font-size="24.8" textLength="74.5" lengthAdjust="spacingAndGlyphs" fill="#f0f0f0" stroke="#f0f0f0" stroke-width=".35">11.0689</text>
<text x="1008.3" y="911.6" font-size="24.8" textLength="74.5" lengthAdjust="spacingAndGlyphs" fill="#f0f0f0" stroke="#f0f0f0" stroke-width=".35">37.2245</text>
<text x="1094.8" y="911.6" font-size="25.5" textLength="63.5" lengthAdjust="spacingAndGlyphs" fill="#f0f0f0" stroke="#f0f0f0" stroke-width=".35">3.7573</text>
<text x="1169.6" y="911.6" font-size="24.8" textLength="74.5" lengthAdjust="spacingAndGlyphs" fill="#f0f0f0" stroke="#f0f0f0" stroke-width=".35">40.9818</text>
<text x="1256.0" y="911.6" font-size="24.8" textLength="74.5" lengthAdjust="spacingAndGlyphs" fill="#f0f0f0" stroke="#f0f0f0" stroke-width=".35">14.8262</text>
<text x="1342.5" y="911.6" font-size="24.8" textLength="74.5" lengthAdjust="spacingAndGlyphs" fill="#f0f0f0" stroke="#f0f0f0" stroke-width=".35">48.2933</text>
<text x="1429.0" y="911.6" font-size="24.8" textLength="74.5" lengthAdjust="spacingAndGlyphs" fill="#f0f0f0" stroke="#f0f0f0" stroke-width=".35">98.0699</text>
<text x="744.4" y="949.4" font-size="25.5" textLength="77.0" lengthAdjust="spacingAndGlyphs" fill="#f0f0f0" stroke="#f0f0f0" stroke-width=".35">ΔE 2000</text>
<text x="836.2" y="949.4" font-size="25.5" textLength="63.5" lengthAdjust="spacingAndGlyphs" fill="#f0f0f0" stroke="#f0f0f0" stroke-width=".35">2.7246</text>
<text x="921.8" y="949.4" font-size="25.5" textLength="63.5" lengthAdjust="spacingAndGlyphs" fill="#f0f0f0" stroke="#f0f0f0" stroke-width=".35">2.0717</text>
<text x="1008.3" y="949.4" font-size="25.5" textLength="63.5" lengthAdjust="spacingAndGlyphs" fill="#f0f0f0" stroke="#f0f0f0" stroke-width=".35">4.4852</text>
<text x="1094.8" y="949.4" font-size="25.5" textLength="63.5" lengthAdjust="spacingAndGlyphs" fill="#f0f0f0" stroke="#f0f0f0" stroke-width=".35">3.4739</text>
<text x="1169.6" y="949.4" font-size="25.5" textLength="63.5" lengthAdjust="spacingAndGlyphs" fill="#f0f0f0" stroke="#f0f0f0" stroke-width=".35">2.5499</text>
<text x="1256.0" y="949.4" font-size="25.5" textLength="63.5" lengthAdjust="spacingAndGlyphs" fill="#f0f0f0" stroke="#f0f0f0" stroke-width=".35">2.2818</text>
<text x="1342.5" y="949.4" font-size="25.5" textLength="63.5" lengthAdjust="spacingAndGlyphs" fill="#f0f0f0" stroke="#f0f0f0" stroke-width=".35">3.7703</text>
<text x="1429.0" y="949.4" font-size="25.5" textLength="63.5" lengthAdjust="spacingAndGlyphs" fill="#f0f0f0" stroke="#f0f0f0" stroke-width=".35">2.0705</text>
<text x="76.0" y="1033.6" font-size="10.6" text-anchor="middle" textLength="30.0" lengthAdjust="spacingAndGlyphs" font-weight="700" fill="#2b2b2b">White</text>
<text x="228.0" y="1033.6" font-size="10.6" text-anchor="middle" textLength="19.0" lengthAdjust="spacingAndGlyphs" font-weight="700" fill="#2b2b2b">Red</text>
<text x="380.0" y="1033.6" font-size="10.6" text-anchor="middle" textLength="30.5" lengthAdjust="spacingAndGlyphs" font-weight="700" fill="#2b2b2b">Green</text>
<text x="532.0" y="1033.6" font-size="10.6" text-anchor="middle" textLength="22.0" lengthAdjust="spacingAndGlyphs" font-weight="700" fill="#2b2b2b">Blue</text>
<text x="684.0" y="1033.6" font-size="10.6" text-anchor="middle" textLength="24.0" lengthAdjust="spacingAndGlyphs" font-weight="700" fill="#2b2b2b">Cyan</text>
<text x="836.0" y="1033.6" font-size="10.6" text-anchor="middle" textLength="44.0" lengthAdjust="spacingAndGlyphs" font-weight="700" fill="#2b2b2b">Magenta</text>
<text x="988.0" y="1033.6" font-size="10.6" text-anchor="middle" textLength="32.0" lengthAdjust="spacingAndGlyphs" font-weight="700" fill="#2b2b2b">Yellow</text>
<text x="1140.0" y="1033.6" font-size="10.6" text-anchor="middle" textLength="29.0" lengthAdjust="spacingAndGlyphs" font-weight="700" fill="#fff">100W</text>
<circle cx="1621" cy="986" r="7" fill="url(#cbc)"/><path d="M1617 988.5h8l-4-4.5z" fill="#2a2a2a"/>
<rect x="1606.5" y="1004.5" width="28" height="28" rx="4" fill="#8a8a8a" stroke="#262626" stroke-width="2.7"/><rect x="1614" y="1012" width="13" height="13" fill="#0a0a0a"/>
<circle cx="1669.0" cy="992.5" r="10" fill="url(#cbc)"/>
<circle cx="1715.0" cy="992.5" r="10" fill="url(#cbc)"/>
<circle cx="1760.0" cy="992.5" r="10" fill="url(#cbc)"/>
<circle cx="1805.0" cy="992.5" r="10" fill="url(#cbc)"/>
<circle cx="1849.75" cy="992.5" r="10" fill="url(#cbc)"/>
<rect x="1665.0" y="988.5" width="8" height="8" fill="#2a2a2a"/>
<path d="M1711.5 987.5v10l8.5-5z" fill="#2a2a2a"/>
<path d="M1757.0 988h-2v9h2M1763.0 988h2v9h-2" fill="none" stroke="#2a2a2a" stroke-width="1.6"/><path d="M1758.0 992.5h4" stroke="#2a2a2a" stroke-width="1.4" stroke-dasharray="1 .6"/>
<text x="1805.0" y="997.5" font-size="15" text-anchor="middle" font-weight="700" fill="#2a2a2a">∞</text>
<path d="M1844.75 991a5.2 5.2 0 0 1 9 -2.2M1854.75 994a5.2 5.2 0 0 1 -9 2.2" fill="none" stroke="#2a2a2a" stroke-width="2"/><path d="M1851.25 989.8h4.2v-4.2zM1848.25 995.2h-4.2v4.2z" fill="#2a2a2a"/>
<circle cx="1895.5" cy="992.5" r="10.5" fill="url(#dkc)"/>
<circle cx="1676" cy="1024" r="10" fill="url(#cbc)"/><circle cx="1890" cy="1024" r="10" fill="url(#cbc)"/>
<path d="M1675 1019.5l-3.5 4.5l3.5 4.5M1680 1019.5l-3.5 4.5l3.5 4.5" fill="none" stroke="#2a2a2a" stroke-width="1.6"/>
<path d="M1886 1019.5l3.5 4.5l-3.5 4.5M1891 1019.5l3.5 4.5l-3.5 4.5" fill="none" stroke="#2a2a2a" stroke-width="1.6"/>
<text x="1703.5" y="1031.0" font-size="21" textLength="50.5" lengthAdjust="spacingAndGlyphs" fill="#303030" stroke="#303030" stroke-width=".7">Back</text>
<text x="1810.0" y="1031.0" font-size="21" textLength="52.0" lengthAdjust="spacingAndGlyphs" fill="#303030" stroke="#303030" stroke-width=".7">Next</text>
<text x="1782.5" y="1055.3" font-size="12" fill="#fff">下午 04:19</text>
<line x1="1915.5" y1="1040.0" x2="1915.5" y2="1048.0" stroke="#888" stroke-width="1"/>
<rect x="1600.0" y="1046.5" width="2.0" height="1.5" fill="#ddd"/><rect x="1604.0" y="1046.5" width="2.0" height="1.5" fill="#ddd"/>
<clipPath id="wmc"><circle cx="901.1" cy="1010.1" r="27.6"/></clipPath><g clip-path="url(#wmc)"><rect x="873" y="982" width="57" height="57" fill="#fff"/><path d="M873 982H912L906 1001L899 1020L894.5 1039H873z" fill="#0f86c4"/></g><path d="M885 1001C884 996 888 990 902 989.5C915 989 921 994 920.5 1003C920.5 1012 920 1019 916 1025C912 1031 906 1034 901 1034C895 1034 889 1029 887 1022C885.5 1016 885.5 1008 885 1001z" fill="#fff" stroke="#0a0a0a" stroke-width="1.8"/><circle cx="883.2" cy="1006.5" r="2.3" fill="#fff" stroke="#0a0a0a" stroke-width="1.4"/><circle cx="921.5" cy="1000.5" r="2.2" fill="#fff" stroke="#0a0a0a" stroke-width="1.4"/><path d="M884.5 1003C884 996 886 992 890 991L889.5 988.5L893 989.5L896 987L899 989L903 987L906.5 989L911 986.5L913 989.5L916.5 989.5L915.5 992.5C919 994 921 997 920.5 1000L917 998L912 997.5L908 995.5L901 996.5L895 998L889 999.5z" fill="#0a0a0a"/><rect x="887" y="1000.5" width="15.5" height="15.5" rx="2.5" fill="#fff" stroke="#0a0a0a" stroke-width="2" transform="rotate(-6 895 1008)"/><circle cx="895" cy="1007.8" r="4.1" fill="#0a0a0a"/><circle cx="896.6" cy="1006.3" r="1.3" fill="#fff"/><rect x="907.3" y="997.8" width="9.5" height="10.8" rx="2" fill="#fff" stroke="#0a0a0a" stroke-width="1.8" transform="rotate(-6 912 1003)"/><circle cx="912.4" cy="1003.3" r="2.5" fill="#0a0a0a"/><circle cx="913.3" cy="1002.4" r=".8" fill="#fff"/><path d="M900.8 996.8L905.3 996.2L908 1018.8L903.3 1019.6z" fill="#fff" stroke="#0a0a0a" stroke-width="1.5"/><path d="M906.2 1001h-1.6M906.5 1004h-1.6M906.9 1007h-1.6M907.2 1010h-1.6M907.5 1013h-1.6M907.8 1016h-1.6" stroke="#0a0a0a" stroke-width=".7"/><path d="M886.8 1020.3C896 1022.5 910 1020 919 1014.5C919 1022 912 1029 902.5 1029C894 1029 888 1025.5 886.8 1020.3z" fill="#fff" stroke="#0a0a0a" stroke-width="1.8"/><path d="M892 1021.5l.7 5.6M897 1022l.3 6.6M902.3 1021.8v7.2M907.5 1020.8l-.2 7.4M912.3 1019l-.8 6.6M888.5 1024.3C897 1026.3 909 1024.8 917.5 1020.2" stroke="#0a0a0a" stroke-width="1.2" fill="none"/><path d="M890.5 1031.5h28" stroke="#0a0a0a" stroke-width="1.2" stroke-dasharray="1.3 1.5" transform="rotate(-3 904 1031)"/>
<text transform="translate(936,1026) skewX(-14)" font-size="31" font-weight="700" fill="#fff" textLength="92" lengthAdjust="spacingAndGlyphs" style="filter:drop-shadow(1.2px 1px 0 rgba(20,20,20,.55))">爱搞机</text>
<text x="1039.8" y="1005.0" font-size="11" text-anchor="middle" font-weight="700" fill="#fff">®</text>
</svg>
</body></html>
